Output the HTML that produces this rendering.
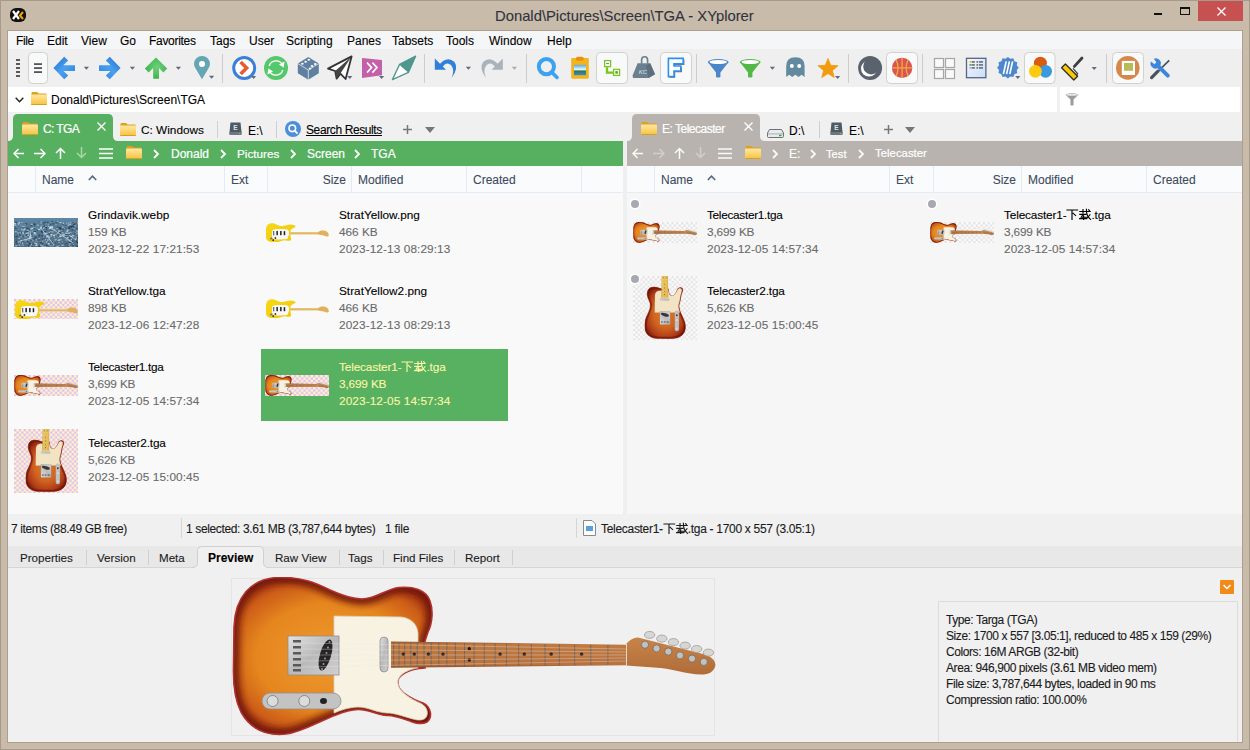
<!DOCTYPE html>
<html><head><meta charset="utf-8"><style>
*{margin:0;padding:0;box-sizing:border-box}
html,body{width:1250px;height:750px;overflow:hidden}
body{position:relative;background:#c9bba9;font-family:"Liberation Sans",sans-serif;font-size:12px;color:#000}
.a{position:absolute}
.t{position:absolute;white-space:nowrap;line-height:1;-webkit-text-stroke:0.1px currentColor}
</style></head><body>
<svg width="0" height="0" style="position:absolute"><defs><filter id="blur3" x="-20%" y="-20%" width="140%" height="140%"><feGaussianBlur stdDeviation="3"/></filter><linearGradient id="fg" x1="0" y1="0" x2="0" y2="1"><stop offset="0" stop-color="#ffe7a2"/><stop offset="1" stop-color="#f6c23e"/></linearGradient><pattern id="ckp" width="4.8" height="4.8" patternUnits="userSpaceOnUse"><rect width="4.8" height="4.8" fill="#fdf9c4"/><rect width="2.4" height="2.4" fill="#e4bdf4"/><rect x="2.4" y="2.4" width="2.4" height="2.4" fill="#e4bdf4"/></pattern><pattern id="ckg" width="4.8" height="4.8" patternUnits="userSpaceOnUse"><rect width="4.8" height="4.8" fill="#fcfcfc"/><rect width="2.4" height="2.4" fill="#e4e4e4"/><rect x="2.4" y="2.4" width="2.4" height="2.4" fill="#e4e4e4"/></pattern><radialGradient id="gburst" gradientUnits="userSpaceOnUse" cx="100" cy="80" r="125" gradientTransform="translate(100 80) scale(1 0.72) translate(-100 -80)"><stop offset="0" stop-color="#ee9a30"/><stop offset="0.6" stop-color="#e5861e"/><stop offset="0.85" stop-color="#cc5c18"/><stop offset="1" stop-color="#9a2e12"/></radialGradient><radialGradient id="gburst2" gradientUnits="userSpaceOnUse" cx="100" cy="80" r="115" gradientTransform="translate(100 80) scale(1 0.8) translate(-100 -80)"><stop offset="0" stop-color="#de7a2a"/><stop offset="0.5" stop-color="#d06420"/><stop offset="0.8" stop-color="#b23e18"/><stop offset="1" stop-color="#7a1c0c"/></radialGradient><linearGradient id="gmaple" x1="0" y1="0" x2="0" y2="1"><stop offset="0" stop-color="#f4cc58"/><stop offset="1" stop-color="#e8b440"/></linearGradient><linearGradient id="gmaple2" x1="0" y1="0" x2="0" y2="1"><stop offset="0" stop-color="#d8a038"/><stop offset="0.15" stop-color="#f2c854"/><stop offset="0.85" stop-color="#f0c450"/><stop offset="1" stop-color="#d09a34"/></linearGradient><linearGradient id="gneck" x1="0" y1="0" x2="0" y2="1"><stop offset="0" stop-color="#c88448"/><stop offset="1" stop-color="#b06c38"/></linearGradient><linearGradient id="gneck2" x1="0" y1="0" x2="0" y2="1"><stop offset="0" stop-color="#94562e"/><stop offset="0.12" stop-color="#bf7a42"/><stop offset="0.88" stop-color="#b8723e"/><stop offset="1" stop-color="#8a4c26"/></linearGradient><linearGradient id="gchrome" x1="0" y1="0" x2="1" y2="1"><stop offset="0" stop-color="#e2e2e2"/><stop offset="0.5" stop-color="#b9b9b9"/><stop offset="1" stop-color="#d0d0d0"/></linearGradient><linearGradient id="gyellow" x1="0" y1="0" x2="1" y2="1"><stop offset="0" stop-color="#f6d818"/><stop offset="1" stop-color="#f0c808"/></linearGradient><linearGradient id="ggr" x1="0" y1="0" x2="0" y2="1"><stop offset="0" stop-color="#5f88a8"/><stop offset="0.2" stop-color="#5a7e98"/><stop offset="1" stop-color="#4e6e86"/></linearGradient><symbol id="grind" viewBox="0 0 64 29"><rect width="64" height="29" fill="url(#ggr)"/><rect x="29.0" y="17.6" width="2.3" height="1.1" fill="#c9dae6" opacity="0.8"/><rect x="11.8" y="16.3" width="1.8" height="1.4" fill="#2c4458" opacity="0.8"/><rect x="28.6" y="6.7" width="1.7" height="1.5" fill="#1f3346" opacity="0.8"/><rect x="38.1" y="13.3" width="1.5" height="1.3" fill="#8fb0c6" opacity="0.8"/><rect x="39.9" y="24.6" width="0.9" height="0.6" fill="#c9dae6" opacity="0.8"/><rect x="38.4" y="23.2" width="1.3" height="1.2" fill="#c9dae6" opacity="0.8"/><rect x="33.2" y="19.6" width="1.6" height="1.3" fill="#22384c" opacity="0.8"/><rect x="41.9" y="13.6" width="1.7" height="1.5" fill="#2c4458" opacity="0.8"/><rect x="45.3" y="11.2" width="1.2" height="0.9" fill="#2c4458" opacity="0.8"/><rect x="36.0" y="5.8" width="1.0" height="0.9" fill="#2c4458" opacity="0.8"/><rect x="61.3" y="25.0" width="0.8" height="0.8" fill="#1f3346" opacity="0.8"/><rect x="30.1" y="28.5" width="1.4" height="0.7" fill="#c9dae6" opacity="0.8"/><rect x="49.8" y="10.0" width="0.9" height="0.9" fill="#a8c0d0" opacity="0.8"/><rect x="48.5" y="6.1" width="1.2" height="0.7" fill="#1f3346" opacity="0.8"/><rect x="29.8" y="15.7" width="1.9" height="0.8" fill="#c9dae6" opacity="0.8"/><rect x="63.1" y="23.0" width="1.5" height="1.0" fill="#a8c0d0" opacity="0.8"/><rect x="26.9" y="8.5" width="1.2" height="1.6" fill="#e6eef4" opacity="0.8"/><rect x="63.9" y="3.5" width="1.1" height="1.6" fill="#2c4458" opacity="0.8"/><rect x="2.7" y="6.8" width="1.5" height="0.6" fill="#456a86" opacity="0.8"/><rect x="53.1" y="13.0" width="0.9" height="0.8" fill="#c9dae6" opacity="0.8"/><rect x="1.0" y="12.6" width="1.8" height="0.7" fill="#22384c" opacity="0.8"/><rect x="53.3" y="6.5" width="1.4" height="1.2" fill="#e6eef4" opacity="0.8"/><rect x="58.1" y="24.3" width="1.2" height="0.8" fill="#c9dae6" opacity="0.8"/><rect x="44.0" y="13.1" width="1.6" height="0.7" fill="#1f3346" opacity="0.8"/><rect x="6.6" y="4.0" width="2.3" height="0.8" fill="#a8c0d0" opacity="0.8"/><rect x="16.4" y="24.4" width="1.8" height="0.9" fill="#8fb0c6" opacity="0.8"/><rect x="59.5" y="28.4" width="1.0" height="1.1" fill="#2c4458" opacity="0.8"/><rect x="17.9" y="26.9" width="1.1" height="0.6" fill="#e6eef4" opacity="0.8"/><rect x="26.3" y="9.5" width="0.9" height="0.9" fill="#8fb0c6" opacity="0.8"/><rect x="5.9" y="6.6" width="1.5" height="0.9" fill="#8fb0c6" opacity="0.8"/><rect x="37.8" y="27.0" width="1.6" height="1.0" fill="#e6eef4" opacity="0.8"/><rect x="61.6" y="3.6" width="1.8" height="1.1" fill="#e6eef4" opacity="0.8"/><rect x="20.4" y="29.0" width="0.9" height="1.1" fill="#1f3346" opacity="0.8"/><rect x="57.6" y="22.2" width="1.9" height="1.4" fill="#456a86" opacity="0.8"/><rect x="22.5" y="20.8" width="2.2" height="1.5" fill="#a8c0d0" opacity="0.8"/><rect x="60.4" y="3.8" width="1.6" height="0.6" fill="#a8c0d0" opacity="0.8"/><rect x="24.3" y="3.3" width="0.9" height="0.7" fill="#2c4458" opacity="0.8"/><rect x="63.6" y="25.9" width="2.0" height="1.0" fill="#22384c" opacity="0.8"/><rect x="28.2" y="24.8" width="0.9" height="1.4" fill="#1f3346" opacity="0.8"/><rect x="19.9" y="5.3" width="0.8" height="1.6" fill="#2c4458" opacity="0.8"/><rect x="31.8" y="19.0" width="2.3" height="0.9" fill="#1f3346" opacity="0.8"/><rect x="23.5" y="6.7" width="1.8" height="1.1" fill="#456a86" opacity="0.8"/><rect x="42.2" y="14.5" width="2.2" height="0.9" fill="#e6eef4" opacity="0.8"/><rect x="12.7" y="14.2" width="2.1" height="1.5" fill="#c9dae6" opacity="0.8"/><rect x="24.6" y="18.2" width="1.3" height="0.7" fill="#22384c" opacity="0.8"/><rect x="22.4" y="26.3" width="0.9" height="0.7" fill="#e6eef4" opacity="0.8"/><rect x="52.6" y="5.9" width="1.6" height="1.5" fill="#a8c0d0" opacity="0.8"/><rect x="24.5" y="16.5" width="1.9" height="1.3" fill="#22384c" opacity="0.8"/><rect x="20.5" y="24.5" width="1.2" height="1.2" fill="#e6eef4" opacity="0.8"/><rect x="36.5" y="11.0" width="2.1" height="0.6" fill="#8fb0c6" opacity="0.8"/><rect x="25.9" y="7.9" width="2.0" height="0.9" fill="#8fb0c6" opacity="0.8"/><rect x="51.0" y="28.6" width="1.0" height="0.7" fill="#456a86" opacity="0.8"/><rect x="61.3" y="20.8" width="1.1" height="1.1" fill="#8fb0c6" opacity="0.8"/><rect x="45.7" y="22.6" width="1.7" height="0.6" fill="#c9dae6" opacity="0.8"/><rect x="17.4" y="12.0" width="1.9" height="1.1" fill="#8fb0c6" opacity="0.8"/><rect x="25.2" y="23.6" width="2.2" height="0.7" fill="#a8c0d0" opacity="0.8"/><rect x="8.3" y="14.8" width="1.8" height="1.5" fill="#a8c0d0" opacity="0.8"/><rect x="35.2" y="20.0" width="1.6" height="1.4" fill="#456a86" opacity="0.8"/><rect x="29.7" y="19.9" width="1.1" height="1.3" fill="#2c4458" opacity="0.8"/><rect x="13.7" y="26.4" width="2.4" height="1.6" fill="#456a86" opacity="0.8"/><rect x="16.8" y="21.7" width="0.8" height="1.1" fill="#1f3346" opacity="0.8"/><rect x="28.2" y="17.3" width="2.0" height="1.1" fill="#1f3346" opacity="0.8"/><rect x="14.0" y="25.6" width="1.5" height="0.6" fill="#456a86" opacity="0.8"/><rect x="43.9" y="26.8" width="1.6" height="1.6" fill="#22384c" opacity="0.8"/><rect x="60.5" y="15.8" width="2.3" height="0.7" fill="#c9dae6" opacity="0.8"/><rect x="28.1" y="17.5" width="2.1" height="1.2" fill="#8fb0c6" opacity="0.8"/><rect x="33.5" y="24.9" width="1.7" height="0.9" fill="#a8c0d0" opacity="0.8"/><rect x="61.1" y="25.6" width="1.8" height="0.9" fill="#8fb0c6" opacity="0.8"/><rect x="62.0" y="16.6" width="1.7" height="0.8" fill="#2c4458" opacity="0.8"/><rect x="32.2" y="18.7" width="0.8" height="1.6" fill="#a8c0d0" opacity="0.8"/><rect x="34.8" y="28.7" width="1.0" height="0.7" fill="#8fb0c6" opacity="0.8"/><rect x="4.2" y="17.0" width="1.5" height="1.6" fill="#a8c0d0" opacity="0.8"/><rect x="17.2" y="15.3" width="1.0" height="1.0" fill="#22384c" opacity="0.8"/><rect x="33.6" y="5.8" width="1.5" height="0.6" fill="#e6eef4" opacity="0.8"/><rect x="8.3" y="23.3" width="0.8" height="0.8" fill="#c9dae6" opacity="0.8"/><rect x="0.8" y="10.4" width="2.0" height="0.8" fill="#22384c" opacity="0.8"/><rect x="6.7" y="22.0" width="1.0" height="1.1" fill="#e6eef4" opacity="0.8"/><rect x="45.9" y="21.2" width="2.2" height="0.6" fill="#a8c0d0" opacity="0.8"/><rect x="52.8" y="19.0" width="1.7" height="1.5" fill="#c9dae6" opacity="0.8"/><rect x="33.9" y="25.1" width="1.8" height="1.5" fill="#c9dae6" opacity="0.8"/><rect x="58.5" y="19.3" width="1.4" height="0.8" fill="#456a86" opacity="0.8"/><rect x="57.0" y="8.1" width="2.0" height="0.8" fill="#2c4458" opacity="0.8"/><rect x="8.6" y="9.2" width="2.0" height="0.9" fill="#2c4458" opacity="0.8"/><rect x="27.8" y="27.5" width="1.7" height="1.3" fill="#c9dae6" opacity="0.8"/><rect x="25.8" y="20.8" width="0.8" height="0.8" fill="#456a86" opacity="0.8"/><rect x="58.3" y="28.2" width="1.0" height="1.1" fill="#456a86" opacity="0.8"/><rect x="32.2" y="20.8" width="1.1" height="0.7" fill="#2c4458" opacity="0.8"/><rect x="1.6" y="22.8" width="1.8" height="1.5" fill="#22384c" opacity="0.8"/><rect x="9.4" y="7.8" width="1.1" height="1.4" fill="#e6eef4" opacity="0.8"/><rect x="59.3" y="5.5" width="0.9" height="1.6" fill="#22384c" opacity="0.8"/><rect x="5.0" y="5.5" width="1.4" height="1.0" fill="#456a86" opacity="0.8"/><rect x="27.5" y="18.6" width="0.8" height="1.3" fill="#c9dae6" opacity="0.8"/><rect x="11.6" y="14.8" width="2.0" height="1.0" fill="#c9dae6" opacity="0.8"/><rect x="38.7" y="5.5" width="2.1" height="0.9" fill="#2c4458" opacity="0.8"/><rect x="51.3" y="21.3" width="2.2" height="1.2" fill="#a8c0d0" opacity="0.8"/><rect x="36.5" y="8.0" width="1.7" height="0.9" fill="#e6eef4" opacity="0.8"/><rect x="17.9" y="6.0" width="2.0" height="0.8" fill="#a8c0d0" opacity="0.8"/><rect x="8.5" y="11.6" width="1.7" height="1.0" fill="#a8c0d0" opacity="0.8"/><rect x="49.0" y="13.5" width="2.0" height="0.7" fill="#456a86" opacity="0.8"/><rect x="19.3" y="5.6" width="2.2" height="1.6" fill="#1f3346" opacity="0.8"/><rect x="14.9" y="27.6" width="1.9" height="0.9" fill="#a8c0d0" opacity="0.8"/><rect x="36.5" y="16.9" width="1.4" height="1.6" fill="#c9dae6" opacity="0.8"/><rect x="44.9" y="22.8" width="2.4" height="0.6" fill="#2c4458" opacity="0.8"/><rect x="47.3" y="9.7" width="1.4" height="0.7" fill="#c9dae6" opacity="0.8"/><rect x="41.5" y="3.3" width="1.2" height="0.9" fill="#456a86" opacity="0.8"/><rect x="35.2" y="16.2" width="2.3" height="1.2" fill="#2c4458" opacity="0.8"/><rect x="40.8" y="24.0" width="0.9" height="1.2" fill="#1f3346" opacity="0.8"/><rect x="24.7" y="27.4" width="1.4" height="1.6" fill="#22384c" opacity="0.8"/><rect x="34.7" y="18.5" width="1.5" height="1.1" fill="#e6eef4" opacity="0.8"/><rect x="33.7" y="18.5" width="1.4" height="0.9" fill="#e6eef4" opacity="0.8"/><rect x="35.9" y="10.4" width="1.9" height="0.9" fill="#1f3346" opacity="0.8"/><rect x="49.4" y="18.2" width="1.8" height="1.0" fill="#a8c0d0" opacity="0.8"/><rect x="3.4" y="11.2" width="1.4" height="1.2" fill="#456a86" opacity="0.8"/><rect x="4.7" y="26.5" width="1.5" height="1.1" fill="#c9dae6" opacity="0.8"/><rect x="2.9" y="5.6" width="2.1" height="1.5" fill="#8fb0c6" opacity="0.8"/><rect x="62.6" y="24.2" width="1.8" height="0.7" fill="#a8c0d0" opacity="0.8"/><rect x="29.2" y="8.3" width="0.9" height="1.1" fill="#2c4458" opacity="0.8"/><rect x="23.3" y="6.6" width="1.5" height="1.2" fill="#a8c0d0" opacity="0.8"/><rect x="23.3" y="22.3" width="2.1" height="0.7" fill="#e6eef4" opacity="0.8"/><rect x="47.0" y="9.2" width="1.0" height="1.5" fill="#456a86" opacity="0.8"/><rect x="17.6" y="18.9" width="2.0" height="1.3" fill="#c9dae6" opacity="0.8"/><rect x="40.5" y="22.6" width="1.1" height="0.8" fill="#c9dae6" opacity="0.8"/><rect x="56.2" y="4.0" width="0.9" height="0.9" fill="#a8c0d0" opacity="0.8"/><rect x="1.7" y="4.0" width="1.2" height="0.9" fill="#2c4458" opacity="0.8"/><rect x="58.4" y="7.2" width="1.2" height="1.6" fill="#22384c" opacity="0.8"/><rect x="30.6" y="8.5" width="1.3" height="1.3" fill="#2c4458" opacity="0.8"/><rect x="51.3" y="14.6" width="2.1" height="1.4" fill="#c9dae6" opacity="0.8"/><rect x="28.4" y="22.4" width="1.4" height="0.8" fill="#8fb0c6" opacity="0.8"/><rect x="41.8" y="28.7" width="1.3" height="1.1" fill="#8fb0c6" opacity="0.8"/><rect x="27.4" y="12.6" width="1.0" height="1.5" fill="#2c4458" opacity="0.8"/><rect x="34.8" y="14.2" width="1.7" height="1.4" fill="#22384c" opacity="0.8"/><rect x="19.1" y="23.2" width="0.9" height="0.8" fill="#2c4458" opacity="0.8"/><rect x="44.5" y="15.9" width="2.0" height="0.9" fill="#8fb0c6" opacity="0.8"/><rect x="14.0" y="20.1" width="1.3" height="1.5" fill="#456a86" opacity="0.8"/><rect x="45.4" y="17.8" width="2.3" height="1.5" fill="#e6eef4" opacity="0.8"/><rect x="28.0" y="23.9" width="1.3" height="0.9" fill="#a8c0d0" opacity="0.8"/><rect x="61.9" y="22.0" width="1.6" height="0.7" fill="#456a86" opacity="0.8"/><rect x="1.5" y="20.6" width="1.7" height="1.4" fill="#456a86" opacity="0.8"/><rect x="51.0" y="17.1" width="2.1" height="1.2" fill="#8fb0c6" opacity="0.8"/><rect x="5.7" y="14.8" width="2.2" height="1.4" fill="#c9dae6" opacity="0.8"/><rect x="33.0" y="17.1" width="1.7" height="1.6" fill="#a8c0d0" opacity="0.8"/><rect x="4.1" y="17.2" width="2.1" height="0.7" fill="#2c4458" opacity="0.8"/><rect x="17.5" y="5.7" width="1.3" height="0.6" fill="#8fb0c6" opacity="0.8"/><rect x="6.2" y="24.2" width="1.5" height="1.3" fill="#22384c" opacity="0.8"/><rect x="49.0" y="16.6" width="2.0" height="1.0" fill="#456a86" opacity="0.8"/><rect x="51.7" y="11.7" width="1.0" height="1.1" fill="#2c4458" opacity="0.8"/><rect x="45.3" y="26.8" width="1.5" height="1.4" fill="#456a86" opacity="0.8"/><rect x="54.6" y="24.0" width="2.1" height="1.5" fill="#1f3346" opacity="0.8"/><rect x="33.5" y="21.5" width="2.1" height="1.0" fill="#a8c0d0" opacity="0.8"/><rect x="58.6" y="9.4" width="1.1" height="1.2" fill="#8fb0c6" opacity="0.8"/><rect x="20.5" y="13.1" width="1.6" height="0.9" fill="#1f3346" opacity="0.8"/><rect x="30.2" y="22.0" width="1.3" height="0.8" fill="#8fb0c6" opacity="0.8"/><rect x="58.4" y="22.6" width="0.8" height="1.1" fill="#1f3346" opacity="0.8"/><rect x="20.0" y="8.1" width="1.4" height="1.2" fill="#22384c" opacity="0.8"/><rect x="38.1" y="8.8" width="1.1" height="0.9" fill="#8fb0c6" opacity="0.8"/><rect x="58.3" y="27.4" width="1.8" height="1.5" fill="#22384c" opacity="0.8"/><rect x="54.6" y="15.6" width="1.4" height="1.6" fill="#2c4458" opacity="0.8"/><rect x="30.9" y="8.7" width="0.9" height="1.5" fill="#a8c0d0" opacity="0.8"/><rect x="62.5" y="23.7" width="2.0" height="1.4" fill="#1f3346" opacity="0.8"/><rect x="42.1" y="9.2" width="0.8" height="1.1" fill="#456a86" opacity="0.8"/><rect x="28.8" y="9.4" width="1.5" height="1.5" fill="#a8c0d0" opacity="0.8"/><rect x="10.0" y="11.4" width="1.2" height="1.5" fill="#8fb0c6" opacity="0.8"/><rect x="40.8" y="28.8" width="1.2" height="1.1" fill="#8fb0c6" opacity="0.8"/><rect x="36.6" y="7.6" width="1.1" height="1.5" fill="#8fb0c6" opacity="0.8"/><rect x="52.6" y="5.1" width="1.2" height="1.3" fill="#2c4458" opacity="0.8"/><rect x="56.9" y="21.0" width="0.9" height="1.3" fill="#e6eef4" opacity="0.8"/><rect x="1.2" y="7.9" width="1.1" height="1.3" fill="#22384c" opacity="0.8"/><rect x="13.3" y="17.1" width="1.6" height="0.8" fill="#e6eef4" opacity="0.8"/><rect x="20.2" y="13.5" width="1.7" height="1.6" fill="#2c4458" opacity="0.8"/><rect x="23.0" y="20.9" width="1.0" height="1.0" fill="#22384c" opacity="0.8"/><rect x="47.8" y="23.4" width="1.0" height="1.0" fill="#a8c0d0" opacity="0.8"/><rect x="45.6" y="15.4" width="1.3" height="0.7" fill="#1f3346" opacity="0.8"/><rect x="54.8" y="25.0" width="2.0" height="1.5" fill="#8fb0c6" opacity="0.8"/><rect x="18.6" y="12.8" width="1.7" height="0.9" fill="#456a86" opacity="0.8"/><rect x="48.3" y="17.4" width="0.9" height="0.8" fill="#a8c0d0" opacity="0.8"/><rect x="46.8" y="11.6" width="2.3" height="1.2" fill="#456a86" opacity="0.8"/><rect x="28.6" y="12.9" width="1.0" height="1.2" fill="#8fb0c6" opacity="0.8"/><rect x="43.4" y="21.4" width="1.1" height="1.0" fill="#22384c" opacity="0.8"/><rect x="37.9" y="5.3" width="1.2" height="0.8" fill="#2c4458" opacity="0.8"/><rect x="27.8" y="23.1" width="1.3" height="1.4" fill="#8fb0c6" opacity="0.8"/><rect x="41.4" y="22.9" width="2.1" height="1.0" fill="#456a86" opacity="0.8"/><rect x="59.0" y="19.2" width="2.0" height="1.2" fill="#456a86" opacity="0.8"/><rect x="62.8" y="23.5" width="1.9" height="1.2" fill="#1f3346" opacity="0.8"/><rect x="16.7" y="7.9" width="1.3" height="1.0" fill="#a8c0d0" opacity="0.8"/><rect x="13.1" y="11.7" width="1.3" height="0.7" fill="#8fb0c6" opacity="0.8"/><rect x="16.2" y="17.0" width="1.3" height="0.8" fill="#8fb0c6" opacity="0.8"/><rect x="36.7" y="8.2" width="2.3" height="1.6" fill="#c9dae6" opacity="0.8"/><rect x="36.3" y="3.7" width="1.9" height="1.4" fill="#8fb0c6" opacity="0.8"/><rect x="15.7" y="18.0" width="1.9" height="0.9" fill="#456a86" opacity="0.8"/><rect x="17.0" y="26.0" width="1.5" height="1.3" fill="#c9dae6" opacity="0.8"/><rect x="57.9" y="17.1" width="1.7" height="1.2" fill="#e6eef4" opacity="0.8"/><rect x="10.8" y="22.4" width="2.2" height="0.9" fill="#8fb0c6" opacity="0.8"/><rect x="7.8" y="24.4" width="1.3" height="1.5" fill="#c9dae6" opacity="0.8"/><rect x="48.5" y="12.4" width="1.1" height="1.2" fill="#2c4458" opacity="0.8"/><rect x="29.1" y="13.5" width="2.1" height="1.5" fill="#8fb0c6" opacity="0.8"/><rect x="19.7" y="20.5" width="2.0" height="1.0" fill="#1f3346" opacity="0.8"/><rect x="10.1" y="13.7" width="0.9" height="1.1" fill="#2c4458" opacity="0.8"/><rect x="36.4" y="7.5" width="1.6" height="0.9" fill="#456a86" opacity="0.8"/><rect x="3.4" y="23.4" width="2.0" height="1.4" fill="#a8c0d0" opacity="0.8"/><rect x="61.4" y="18.6" width="1.6" height="1.0" fill="#a8c0d0" opacity="0.8"/><rect x="48.1" y="15.6" width="2.4" height="1.4" fill="#a8c0d0" opacity="0.8"/><rect x="52.8" y="6.1" width="1.0" height="1.5" fill="#456a86" opacity="0.8"/><rect x="33.6" y="14.2" width="2.2" height="0.9" fill="#1f3346" opacity="0.8"/><rect x="18.9" y="19.0" width="1.5" height="1.0" fill="#456a86" opacity="0.8"/><rect x="48.1" y="10.9" width="1.7" height="0.7" fill="#2c4458" opacity="0.8"/><rect x="54.0" y="9.3" width="2.2" height="1.6" fill="#22384c" opacity="0.8"/><rect x="44.5" y="16.7" width="1.2" height="0.9" fill="#a8c0d0" opacity="0.8"/><rect x="60.2" y="25.9" width="2.4" height="1.3" fill="#456a86" opacity="0.8"/><rect x="55.5" y="14.0" width="2.1" height="0.8" fill="#a8c0d0" opacity="0.8"/><rect x="36.3" y="26.5" width="1.0" height="1.4" fill="#2c4458" opacity="0.8"/><rect x="56.5" y="18.0" width="1.5" height="0.9" fill="#e6eef4" opacity="0.8"/><rect x="1.5" y="7.5" width="1.5" height="1.1" fill="#a8c0d0" opacity="0.8"/><rect x="9.0" y="21.0" width="1.2" height="0.9" fill="#22384c" opacity="0.8"/><rect x="57.5" y="11.0" width="1.6" height="1.5" fill="#22384c" opacity="0.8"/><rect x="56.2" y="8.3" width="2.2" height="1.3" fill="#1f3346" opacity="0.8"/><rect x="12.5" y="24.8" width="1.4" height="1.1" fill="#8fb0c6" opacity="0.8"/><rect x="40.7" y="21.1" width="1.7" height="1.1" fill="#c9dae6" opacity="0.8"/><rect x="12.3" y="25.9" width="0.9" height="0.7" fill="#456a86" opacity="0.8"/><rect x="61.5" y="10.1" width="1.5" height="1.5" fill="#456a86" opacity="0.8"/><rect x="44.5" y="27.4" width="1.5" height="0.7" fill="#c9dae6" opacity="0.8"/><rect x="55.1" y="6.1" width="1.9" height="0.9" fill="#c9dae6" opacity="0.8"/><rect x="32.1" y="10.7" width="1.2" height="1.4" fill="#2c4458" opacity="0.8"/><rect x="37.8" y="9.0" width="1.3" height="1.5" fill="#c9dae6" opacity="0.8"/><rect x="17.7" y="19.6" width="0.9" height="1.6" fill="#22384c" opacity="0.8"/><rect x="58.7" y="4.9" width="2.3" height="0.6" fill="#e6eef4" opacity="0.8"/><rect x="34.4" y="14.0" width="1.7" height="0.8" fill="#c9dae6" opacity="0.8"/><rect x="15.7" y="10.3" width="1.7" height="0.8" fill="#8fb0c6" opacity="0.8"/><rect x="63.2" y="3.9" width="1.5" height="1.4" fill="#a8c0d0" opacity="0.8"/><rect x="0.2" y="26.2" width="0.9" height="0.7" fill="#456a86" opacity="0.8"/><rect x="20.5" y="15.6" width="0.9" height="0.9" fill="#8fb0c6" opacity="0.8"/><rect x="38.0" y="23.1" width="1.0" height="1.0" fill="#22384c" opacity="0.8"/><rect x="35.1" y="9.7" width="1.9" height="1.3" fill="#e6eef4" opacity="0.8"/><rect x="31.3" y="8.8" width="1.7" height="1.1" fill="#1f3346" opacity="0.8"/><rect x="13.0" y="28.2" width="0.9" height="1.0" fill="#8fb0c6" opacity="0.8"/><rect x="20.8" y="18.8" width="1.8" height="1.4" fill="#22384c" opacity="0.8"/><rect x="46.3" y="25.3" width="0.8" height="0.7" fill="#8fb0c6" opacity="0.8"/><rect x="36.4" y="17.1" width="2.1" height="0.8" fill="#8fb0c6" opacity="0.8"/><rect x="3.5" y="14.1" width="1.9" height="1.4" fill="#e6eef4" opacity="0.8"/><rect x="49.0" y="16.0" width="1.8" height="1.1" fill="#a8c0d0" opacity="0.8"/><rect x="16.3" y="7.2" width="1.9" height="1.4" fill="#22384c" opacity="0.8"/><rect x="3.9" y="13.7" width="1.4" height="0.8" fill="#1f3346" opacity="0.8"/><rect x="8.2" y="22.6" width="1.8" height="0.7" fill="#22384c" opacity="0.8"/><rect x="33.4" y="28.6" width="0.8" height="1.0" fill="#8fb0c6" opacity="0.8"/><rect x="5.9" y="17.5" width="1.6" height="1.5" fill="#1f3346" opacity="0.8"/><rect x="43.5" y="21.6" width="2.4" height="1.2" fill="#e6eef4" opacity="0.8"/><rect x="16.2" y="17.3" width="1.2" height="1.1" fill="#c9dae6" opacity="0.8"/><rect x="23.3" y="11.8" width="2.4" height="1.2" fill="#1f3346" opacity="0.8"/><rect x="10.3" y="18.2" width="2.4" height="1.3" fill="#8fb0c6" opacity="0.8"/><rect x="29.6" y="13.2" width="2.1" height="1.0" fill="#1f3346" opacity="0.8"/><rect x="13.8" y="12.0" width="1.1" height="1.1" fill="#8fb0c6" opacity="0.8"/><rect x="30.7" y="13.4" width="1.8" height="1.4" fill="#22384c" opacity="0.8"/><rect x="28.6" y="28.8" width="1.9" height="1.5" fill="#c9dae6" opacity="0.8"/><rect x="34.6" y="13.9" width="0.9" height="0.9" fill="#e6eef4" opacity="0.8"/><rect x="39.7" y="16.5" width="2.0" height="1.1" fill="#c9dae6" opacity="0.8"/><rect x="17.2" y="12.4" width="1.0" height="1.5" fill="#456a86" opacity="0.8"/><rect x="8.8" y="9.3" width="2.1" height="0.7" fill="#456a86" opacity="0.8"/><rect x="53.7" y="14.7" width="2.2" height="1.0" fill="#e6eef4" opacity="0.8"/><rect x="49.3" y="16.5" width="0.9" height="1.0" fill="#c9dae6" opacity="0.8"/><rect x="31.3" y="7.9" width="1.6" height="0.7" fill="#c9dae6" opacity="0.8"/><rect x="20.0" y="14.0" width="1.7" height="0.7" fill="#e6eef4" opacity="0.8"/><rect x="20.1" y="14.7" width="1.4" height="1.5" fill="#e6eef4" opacity="0.8"/><rect x="34.2" y="14.7" width="1.0" height="1.1" fill="#456a86" opacity="0.8"/><rect x="14.5" y="10.6" width="1.4" height="0.8" fill="#1f3346" opacity="0.8"/><rect x="54.3" y="22.4" width="1.6" height="0.6" fill="#e6eef4" opacity="0.8"/><rect x="42.3" y="4.7" width="2.2" height="1.2" fill="#456a86" opacity="0.8"/><rect x="42.7" y="27.8" width="2.2" height="0.8" fill="#e6eef4" opacity="0.8"/><rect x="5.8" y="14.1" width="1.4" height="0.7" fill="#a8c0d0" opacity="0.8"/><rect x="59.6" y="10.4" width="1.9" height="0.8" fill="#a8c0d0" opacity="0.8"/><rect x="12.9" y="23.0" width="1.4" height="1.3" fill="#2c4458" opacity="0.8"/><rect x="47.5" y="26.6" width="2.1" height="1.1" fill="#e6eef4" opacity="0.8"/><rect x="44.9" y="17.4" width="1.9" height="0.6" fill="#a8c0d0" opacity="0.8"/><rect x="7.7" y="26.7" width="2.3" height="0.9" fill="#a8c0d0" opacity="0.8"/><rect x="31.7" y="18.2" width="1.6" height="0.9" fill="#e6eef4" opacity="0.8"/><rect x="4.6" y="3.9" width="1.3" height="1.0" fill="#e6eef4" opacity="0.8"/><rect x="16.8" y="20.4" width="1.1" height="1.1" fill="#456a86" opacity="0.8"/><rect x="61.1" y="12.4" width="1.7" height="1.5" fill="#2c4458" opacity="0.8"/><rect x="40.1" y="19.1" width="1.5" height="1.0" fill="#e6eef4" opacity="0.8"/><rect x="4.4" y="15.1" width="1.5" height="1.6" fill="#a8c0d0" opacity="0.8"/><rect x="2.4" y="6.5" width="1.6" height="0.9" fill="#456a86" opacity="0.8"/><rect x="30.3" y="3.5" width="1.8" height="0.9" fill="#e6eef4" opacity="0.8"/><rect x="43.5" y="9.1" width="0.8" height="1.1" fill="#a8c0d0" opacity="0.8"/><rect x="0.2" y="17.2" width="2.2" height="1.4" fill="#2c4458" opacity="0.8"/><rect x="40.0" y="17.6" width="2.1" height="1.6" fill="#456a86" opacity="0.8"/><rect x="16.9" y="5.7" width="0.8" height="1.4" fill="#c9dae6" opacity="0.8"/><rect x="44.5" y="20.9" width="2.3" height="1.4" fill="#8fb0c6" opacity="0.8"/><rect x="21.3" y="20.9" width="2.1" height="0.9" fill="#a8c0d0" opacity="0.8"/><rect x="18.3" y="22.5" width="1.7" height="0.8" fill="#c9dae6" opacity="0.8"/><rect x="23.2" y="21.4" width="2.3" height="1.3" fill="#2c4458" opacity="0.8"/><rect x="63.3" y="24.3" width="2.2" height="0.9" fill="#22384c" opacity="0.8"/><rect x="32.8" y="20.7" width="0.9" height="1.2" fill="#a8c0d0" opacity="0.8"/><rect x="55.7" y="4.4" width="1.2" height="1.1" fill="#a8c0d0" opacity="0.8"/><rect x="16.2" y="19.5" width="1.4" height="1.3" fill="#8fb0c6" opacity="0.8"/><rect x="21.4" y="22.7" width="2.1" height="1.4" fill="#a8c0d0" opacity="0.8"/><rect x="41.0" y="6.3" width="2.0" height="0.9" fill="#8fb0c6" opacity="0.8"/><rect x="8.0" y="12.8" width="1.9" height="0.8" fill="#8fb0c6" opacity="0.8"/><rect x="62.3" y="15.3" width="1.9" height="1.4" fill="#8fb0c6" opacity="0.8"/><rect x="17.2" y="10.0" width="1.2" height="1.3" fill="#a8c0d0" opacity="0.8"/><rect x="59.7" y="28.7" width="0.9" height="1.3" fill="#2c4458" opacity="0.8"/><rect x="55.7" y="8.0" width="1.4" height="1.1" fill="#2c4458" opacity="0.8"/><rect x="25.9" y="26.5" width="2.1" height="1.5" fill="#8fb0c6" opacity="0.8"/><rect x="23.9" y="11.0" width="2.1" height="1.4" fill="#e6eef4" opacity="0.8"/><rect x="14.3" y="21.8" width="1.5" height="0.7" fill="#a8c0d0" opacity="0.8"/><rect x="43.2" y="8.6" width="1.3" height="1.5" fill="#22384c" opacity="0.8"/><rect x="11.2" y="5.8" width="2.3" height="0.9" fill="#22384c" opacity="0.8"/><rect x="27.7" y="6.9" width="2.2" height="0.9" fill="#8fb0c6" opacity="0.8"/><rect x="17.5" y="13.4" width="1.3" height="0.7" fill="#c9dae6" opacity="0.8"/><rect x="23.4" y="9.7" width="0.9" height="0.7" fill="#e6eef4" opacity="0.8"/><rect x="42.9" y="3.1" width="1.3" height="0.7" fill="#c9dae6" opacity="0.8"/><rect x="63.5" y="13.6" width="0.9" height="1.0" fill="#a8c0d0" opacity="0.8"/><rect x="35.7" y="8.6" width="1.8" height="1.4" fill="#e6eef4" opacity="0.8"/><rect x="17.7" y="27.4" width="2.2" height="1.6" fill="#22384c" opacity="0.8"/><rect x="36.6" y="27.5" width="0.9" height="1.5" fill="#8fb0c6" opacity="0.8"/><rect x="34.5" y="20.5" width="1.2" height="0.6" fill="#e6eef4" opacity="0.8"/><rect x="4.0" y="15.1" width="2.2" height="0.7" fill="#456a86" opacity="0.8"/><rect x="0.7" y="16.7" width="2.1" height="1.4" fill="#22384c" opacity="0.8"/><rect x="25.6" y="23.9" width="2.1" height="1.4" fill="#2c4458" opacity="0.8"/><rect x="59.9" y="15.5" width="2.1" height="1.0" fill="#1f3346" opacity="0.8"/><rect x="0.6" y="6.7" width="1.3" height="1.3" fill="#e6eef4" opacity="0.8"/><rect x="51.9" y="12.5" width="1.8" height="1.0" fill="#e6eef4" opacity="0.8"/><rect x="4.3" y="20.0" width="1.8" height="0.9" fill="#c9dae6" opacity="0.8"/><rect x="47.5" y="8.5" width="2.0" height="1.1" fill="#c9dae6" opacity="0.8"/><rect x="11.3" y="5.8" width="1.0" height="1.0" fill="#a8c0d0" opacity="0.8"/><rect x="1.4" y="13.4" width="0.9" height="0.7" fill="#c9dae6" opacity="0.8"/><rect x="1.3" y="7.5" width="0.9" height="1.2" fill="#456a86" opacity="0.8"/><rect x="27.5" y="28.0" width="1.2" height="1.0" fill="#8fb0c6" opacity="0.8"/><rect x="52.0" y="4.8" width="1.4" height="1.5" fill="#8fb0c6" opacity="0.8"/><rect x="49.8" y="16.7" width="0.8" height="1.3" fill="#a8c0d0" opacity="0.8"/><rect x="58.3" y="4.4" width="1.8" height="0.9" fill="#22384c" opacity="0.8"/><rect x="54.8" y="19.3" width="1.6" height="1.2" fill="#2c4458" opacity="0.8"/><rect x="7.8" y="22.2" width="2.0" height="1.0" fill="#22384c" opacity="0.8"/><rect x="26.8" y="13.0" width="1.2" height="1.2" fill="#1f3346" opacity="0.8"/><rect x="33.0" y="3.8" width="1.8" height="1.0" fill="#1f3346" opacity="0.8"/><rect x="38.1" y="27.2" width="1.0" height="1.1" fill="#e6eef4" opacity="0.8"/><rect x="47.2" y="11.1" width="2.0" height="1.6" fill="#a8c0d0" opacity="0.8"/><rect x="3.4" y="28.2" width="2.0" height="1.5" fill="#2c4458" opacity="0.8"/><rect x="15.0" y="24.8" width="1.8" height="1.5" fill="#2c4458" opacity="0.8"/><rect x="51.1" y="16.3" width="2.4" height="0.7" fill="#1f3346" opacity="0.8"/><rect x="45.5" y="9.5" width="2.1" height="1.1" fill="#1f3346" opacity="0.8"/><rect x="55.4" y="8.1" width="1.2" height="1.2" fill="#2c4458" opacity="0.8"/><rect x="6.9" y="14.5" width="2.0" height="1.5" fill="#2c4458" opacity="0.8"/><rect x="51.2" y="25.2" width="2.0" height="1.1" fill="#2c4458" opacity="0.8"/><rect x="51.0" y="6.9" width="1.4" height="0.7" fill="#1f3346" opacity="0.8"/><rect x="59.4" y="27.8" width="1.2" height="0.9" fill="#a8c0d0" opacity="0.8"/><rect x="11.6" y="13.1" width="2.2" height="1.2" fill="#22384c" opacity="0.8"/><rect x="4.6" y="28.7" width="1.1" height="1.2" fill="#c9dae6" opacity="0.8"/><rect x="35.8" y="28.9" width="1.4" height="1.4" fill="#456a86" opacity="0.8"/><rect x="54.1" y="27.6" width="1.9" height="0.8" fill="#c9dae6" opacity="0.8"/><rect x="11.6" y="6.3" width="1.9" height="1.1" fill="#8fb0c6" opacity="0.8"/><rect x="17.8" y="9.7" width="1.4" height="1.2" fill="#e6eef4" opacity="0.8"/><rect x="12.6" y="28.9" width="1.9" height="1.3" fill="#456a86" opacity="0.8"/><rect x="55.7" y="23.0" width="1.1" height="0.7" fill="#e6eef4" opacity="0.8"/><rect x="27.2" y="24.3" width="1.5" height="1.1" fill="#2c4458" opacity="0.8"/><rect x="60.3" y="12.0" width="1.9" height="0.8" fill="#2c4458" opacity="0.8"/><rect x="18.2" y="25.7" width="1.3" height="1.5" fill="#22384c" opacity="0.8"/><rect x="14.4" y="15.4" width="1.1" height="1.0" fill="#c9dae6" opacity="0.8"/><rect x="28.7" y="4.7" width="1.5" height="0.9" fill="#22384c" opacity="0.8"/><rect x="42.1" y="10.0" width="1.9" height="0.6" fill="#c9dae6" opacity="0.8"/><rect x="1.0" y="12.7" width="1.7" height="1.5" fill="#a8c0d0" opacity="0.8"/><rect x="26.9" y="11.9" width="2.1" height="1.5" fill="#2c4458" opacity="0.8"/><rect x="34.9" y="5.6" width="2.2" height="0.7" fill="#456a86" opacity="0.8"/><rect x="1.0" y="3.8" width="1.7" height="1.3" fill="#1f3346" opacity="0.8"/><rect x="42.8" y="7.0" width="0.9" height="0.8" fill="#456a86" opacity="0.8"/><rect x="30.7" y="19.9" width="0.9" height="0.8" fill="#1f3346" opacity="0.8"/><rect x="63.5" y="13.3" width="2.1" height="1.2" fill="#2c4458" opacity="0.8"/><rect x="63.8" y="4.7" width="1.5" height="1.0" fill="#c9dae6" opacity="0.8"/><rect x="33.1" y="18.2" width="1.6" height="1.4" fill="#a8c0d0" opacity="0.8"/><rect x="6.1" y="23.7" width="0.8" height="1.6" fill="#e6eef4" opacity="0.8"/><rect x="42.5" y="28.2" width="1.6" height="1.5" fill="#a8c0d0" opacity="0.8"/><rect x="30.0" y="3.4" width="2.2" height="1.5" fill="#1f3346" opacity="0.8"/><rect x="7.0" y="13.7" width="1.7" height="1.6" fill="#2c4458" opacity="0.8"/><rect x="19.3" y="16.2" width="1.0" height="1.2" fill="#8fb0c6" opacity="0.8"/><rect x="42.4" y="16.3" width="1.3" height="1.0" fill="#c9dae6" opacity="0.8"/><rect x="15.8" y="13.8" width="0.9" height="0.8" fill="#22384c" opacity="0.8"/><rect x="10.9" y="5.7" width="1.0" height="1.5" fill="#8fb0c6" opacity="0.8"/><rect x="9.2" y="17.7" width="1.1" height="1.2" fill="#2c4458" opacity="0.8"/><rect x="26.5" y="3.3" width="1.0" height="1.4" fill="#a8c0d0" opacity="0.8"/><rect x="10.0" y="16.8" width="0.8" height="0.7" fill="#e6eef4" opacity="0.8"/><rect x="58.4" y="17.1" width="2.0" height="1.4" fill="#a8c0d0" opacity="0.8"/><rect x="26.6" y="5.0" width="1.2" height="0.7" fill="#a8c0d0" opacity="0.8"/><rect x="21.0" y="15.7" width="1.8" height="1.5" fill="#8fb0c6" opacity="0.8"/><rect x="36.3" y="16.0" width="2.2" height="1.0" fill="#e6eef4" opacity="0.8"/><rect x="17.1" y="18.6" width="1.2" height="0.7" fill="#22384c" opacity="0.8"/><rect x="24.6" y="19.9" width="1.3" height="0.7" fill="#e6eef4" opacity="0.8"/><rect x="53.5" y="4.6" width="1.6" height="1.1" fill="#a8c0d0" opacity="0.8"/><rect x="52.4" y="20.6" width="1.9" height="0.6" fill="#456a86" opacity="0.8"/><rect x="31.0" y="9.0" width="2.0" height="1.1" fill="#1f3346" opacity="0.8"/><rect x="23.9" y="18.4" width="1.0" height="1.3" fill="#456a86" opacity="0.8"/><rect x="61.5" y="12.5" width="1.8" height="1.0" fill="#e6eef4" opacity="0.8"/><rect x="13.4" y="22.8" width="0.9" height="0.8" fill="#2c4458" opacity="0.8"/><rect x="33.0" y="22.6" width="0.9" height="0.7" fill="#e6eef4" opacity="0.8"/><rect x="37.7" y="24.0" width="2.3" height="1.2" fill="#456a86" opacity="0.8"/><rect x="25.7" y="10.4" width="1.9" height="0.7" fill="#c9dae6" opacity="0.8"/><rect x="53.2" y="11.5" width="1.3" height="1.4" fill="#e6eef4" opacity="0.8"/><rect x="41.1" y="4.5" width="2.0" height="0.6" fill="#2c4458" opacity="0.8"/><rect x="35.3" y="27.1" width="1.8" height="0.6" fill="#c9dae6" opacity="0.8"/><rect x="37.1" y="3.1" width="2.0" height="1.0" fill="#2c4458" opacity="0.8"/><rect x="11.0" y="5.2" width="1.9" height="0.7" fill="#22384c" opacity="0.8"/><rect x="43.3" y="23.8" width="1.5" height="1.5" fill="#2c4458" opacity="0.8"/><rect x="53.5" y="27.9" width="1.4" height="1.4" fill="#2c4458" opacity="0.8"/><rect x="45.0" y="13.3" width="1.9" height="1.3" fill="#2c4458" opacity="0.8"/><rect x="59.0" y="8.5" width="1.5" height="1.1" fill="#2c4458" opacity="0.8"/><rect x="9.9" y="10.1" width="1.5" height="1.5" fill="#a8c0d0" opacity="0.8"/><rect x="12.8" y="21.3" width="1.6" height="1.0" fill="#a8c0d0" opacity="0.8"/><rect x="32.7" y="15.5" width="1.7" height="1.5" fill="#456a86" opacity="0.8"/><rect x="12.9" y="12.0" width="1.1" height="0.9" fill="#a8c0d0" opacity="0.8"/><rect x="29.0" y="18.3" width="1.5" height="1.4" fill="#8fb0c6" opacity="0.8"/><rect x="30.8" y="28.5" width="1.3" height="1.3" fill="#c9dae6" opacity="0.8"/><rect x="40.5" y="12.1" width="1.5" height="0.6" fill="#2c4458" opacity="0.8"/><rect x="51.4" y="9.6" width="1.2" height="0.8" fill="#2c4458" opacity="0.8"/><rect x="35.8" y="28.4" width="2.3" height="1.1" fill="#22384c" opacity="0.8"/><rect x="7.5" y="7.8" width="1.8" height="1.3" fill="#8fb0c6" opacity="0.8"/><rect x="2.2" y="21.2" width="1.7" height="1.2" fill="#456a86" opacity="0.8"/><rect x="31.3" y="14.6" width="2.4" height="1.0" fill="#e6eef4" opacity="0.8"/><rect x="6.3" y="23.4" width="1.1" height="0.8" fill="#456a86" opacity="0.8"/><rect x="7.7" y="22.9" width="1.7" height="1.5" fill="#456a86" opacity="0.8"/><rect x="44.1" y="12.5" width="2.3" height="1.3" fill="#e6eef4" opacity="0.8"/><rect x="38.9" y="24.6" width="2.4" height="0.7" fill="#456a86" opacity="0.8"/><rect x="1.3" y="17.0" width="1.2" height="0.9" fill="#e6eef4" opacity="0.8"/><rect x="35.9" y="9.8" width="0.9" height="0.6" fill="#e6eef4" opacity="0.8"/><rect x="60.4" y="7.0" width="1.4" height="1.4" fill="#8fb0c6" opacity="0.8"/><rect x="39.0" y="17.1" width="2.0" height="1.1" fill="#e6eef4" opacity="0.8"/><rect x="19.6" y="14.1" width="2.0" height="1.3" fill="#c9dae6" opacity="0.8"/><rect x="30.8" y="20.8" width="1.4" height="0.8" fill="#e6eef4" opacity="0.8"/><rect x="36.2" y="12.1" width="1.2" height="1.5" fill="#2c4458" opacity="0.8"/><rect x="36.8" y="27.1" width="2.0" height="0.9" fill="#1f3346" opacity="0.8"/><rect x="6.5" y="17.7" width="1.0" height="1.6" fill="#e6eef4" opacity="0.8"/><rect x="22.6" y="6.7" width="2.3" height="1.3" fill="#8fb0c6" opacity="0.8"/><rect x="1.9" y="17.8" width="2.4" height="1.3" fill="#2c4458" opacity="0.8"/><rect x="28.0" y="20.7" width="0.9" height="1.3" fill="#22384c" opacity="0.8"/><rect x="59.2" y="25.9" width="1.0" height="0.7" fill="#c9dae6" opacity="0.8"/><rect x="5.0" y="15.7" width="1.7" height="1.6" fill="#2c4458" opacity="0.8"/><rect x="8.6" y="10.8" width="1.3" height="1.3" fill="#8fb0c6" opacity="0.8"/><rect x="62.5" y="27.7" width="2.3" height="1.5" fill="#1f3346" opacity="0.8"/><rect x="39.0" y="23.7" width="2.4" height="1.2" fill="#456a86" opacity="0.8"/><rect x="59.7" y="5.2" width="1.6" height="1.6" fill="#1f3346" opacity="0.8"/><rect x="7.0" y="10.7" width="1.3" height="1.6" fill="#a8c0d0" opacity="0.8"/><rect x="2.0" y="24.6" width="1.9" height="1.1" fill="#2c4458" opacity="0.8"/><rect x="0.0" y="4.8" width="2.1" height="1.6" fill="#c9dae6" opacity="0.8"/><rect x="26.1" y="11.7" width="1.4" height="0.6" fill="#c9dae6" opacity="0.8"/><rect x="16.8" y="18.2" width="1.6" height="0.9" fill="#456a86" opacity="0.8"/><rect x="29.1" y="9.1" width="2.2" height="0.8" fill="#8fb0c6" opacity="0.8"/><rect x="13.5" y="14.7" width="1.2" height="1.5" fill="#8fb0c6" opacity="0.8"/><rect x="15.2" y="20.0" width="1.2" height="1.1" fill="#e6eef4" opacity="0.8"/><rect x="36.7" y="3.6" width="1.3" height="0.7" fill="#456a86" opacity="0.8"/><rect x="47.3" y="8.3" width="0.9" height="0.8" fill="#2c4458" opacity="0.8"/><rect x="5.0" y="22.9" width="1.2" height="0.8" fill="#a8c0d0" opacity="0.8"/><rect x="35.7" y="6.6" width="1.9" height="0.7" fill="#2c4458" opacity="0.8"/><rect x="63.4" y="13.1" width="1.0" height="1.4" fill="#c9dae6" opacity="0.8"/><rect x="21.6" y="23.6" width="1.4" height="0.9" fill="#2c4458" opacity="0.8"/><rect x="30.5" y="24.3" width="0.8" height="1.1" fill="#a8c0d0" opacity="0.8"/><rect x="61.1" y="14.0" width="1.1" height="0.7" fill="#8fb0c6" opacity="0.8"/><rect x="56.2" y="28.0" width="2.3" height="0.9" fill="#8fb0c6" opacity="0.8"/><rect x="9.1" y="21.6" width="2.3" height="0.8" fill="#8fb0c6" opacity="0.8"/><rect x="44.9" y="9.2" width="2.2" height="1.5" fill="#22384c" opacity="0.8"/><rect x="23.5" y="21.9" width="2.3" height="0.7" fill="#2c4458" opacity="0.8"/><rect x="62.9" y="21.9" width="1.9" height="0.7" fill="#456a86" opacity="0.8"/><rect x="11.7" y="6.2" width="1.6" height="1.1" fill="#22384c" opacity="0.8"/><rect x="48.8" y="16.7" width="2.3" height="0.7" fill="#c9dae6" opacity="0.8"/><rect x="1.1" y="27.0" width="2.4" height="1.5" fill="#8fb0c6" opacity="0.8"/><rect x="10.3" y="11.6" width="1.7" height="0.9" fill="#22384c" opacity="0.8"/><rect x="22.4" y="28.9" width="1.6" height="0.6" fill="#8fb0c6" opacity="0.8"/><rect x="60.4" y="28.4" width="0.8" height="1.4" fill="#a8c0d0" opacity="0.8"/><rect x="34.8" y="10.3" width="0.9" height="1.0" fill="#c9dae6" opacity="0.8"/><rect x="61.5" y="3.6" width="1.5" height="1.6" fill="#2c4458" opacity="0.8"/><rect x="29.8" y="7.7" width="0.8" height="0.9" fill="#1f3346" opacity="0.8"/><rect x="21.5" y="25.0" width="1.7" height="1.3" fill="#e6eef4" opacity="0.8"/><rect x="39.9" y="11.2" width="1.4" height="1.5" fill="#a8c0d0" opacity="0.8"/><rect x="27.5" y="18.3" width="1.2" height="1.5" fill="#22384c" opacity="0.8"/><rect x="14.9" y="27.3" width="2.2" height="1.5" fill="#8fb0c6" opacity="0.8"/><rect x="30.0" y="17.6" width="2.3" height="1.4" fill="#456a86" opacity="0.8"/><rect x="15.0" y="18.2" width="1.1" height="1.5" fill="#e6eef4" opacity="0.8"/><rect x="40.9" y="19.5" width="0.8" height="1.1" fill="#2c4458" opacity="0.8"/><rect x="31.8" y="27.0" width="1.6" height="1.0" fill="#1f3346" opacity="0.8"/><rect x="42.4" y="13.4" width="1.6" height="1.4" fill="#22384c" opacity="0.8"/><rect x="3.6" y="11.3" width="1.8" height="0.7" fill="#8fb0c6" opacity="0.8"/><rect x="62.1" y="10.3" width="1.5" height="0.7" fill="#1f3346" opacity="0.8"/><rect x="15.0" y="24.6" width="2.1" height="0.9" fill="#2c4458" opacity="0.8"/><rect x="27.3" y="17.4" width="2.3" height="1.1" fill="#22384c" opacity="0.8"/><rect x="9.7" y="11.2" width="1.9" height="1.1" fill="#c9dae6" opacity="0.8"/><rect x="41.4" y="20.9" width="1.5" height="0.9" fill="#8fb0c6" opacity="0.8"/><rect x="43.8" y="23.7" width="1.9" height="1.4" fill="#8fb0c6" opacity="0.8"/><rect x="7.5" y="15.4" width="1.9" height="0.6" fill="#1f3346" opacity="0.8"/><rect x="61.2" y="20.1" width="1.6" height="1.2" fill="#a8c0d0" opacity="0.8"/><rect x="59.7" y="19.8" width="0.9" height="1.3" fill="#2c4458" opacity="0.8"/><rect x="16.6" y="10.5" width="1.4" height="0.9" fill="#e6eef4" opacity="0.8"/><rect x="63.0" y="19.2" width="1.0" height="1.3" fill="#1f3346" opacity="0.8"/><rect x="27.9" y="13.6" width="1.4" height="1.4" fill="#1f3346" opacity="0.8"/><rect x="36.4" y="27.5" width="1.8" height="1.1" fill="#a8c0d0" opacity="0.8"/><rect x="45.5" y="4.0" width="2.2" height="1.1" fill="#c9dae6" opacity="0.8"/><rect x="14.8" y="19.1" width="1.0" height="0.8" fill="#a8c0d0" opacity="0.8"/><rect x="20.2" y="10.1" width="1.1" height="1.2" fill="#2c4458" opacity="0.8"/><rect x="21.2" y="27.1" width="2.3" height="0.9" fill="#e6eef4" opacity="0.8"/><rect x="61.6" y="23.1" width="1.3" height="0.9" fill="#22384c" opacity="0.8"/><rect x="4.2" y="5.5" width="1.9" height="0.7" fill="#c9dae6" opacity="0.8"/><rect x="18.5" y="27.3" width="1.4" height="1.0" fill="#a8c0d0" opacity="0.8"/><rect x="4.5" y="4.4" width="1.4" height="1.1" fill="#a8c0d0" opacity="0.8"/><rect x="13.8" y="26.9" width="2.1" height="1.5" fill="#2c4458" opacity="0.8"/><rect x="7.8" y="14.3" width="1.9" height="1.4" fill="#e6eef4" opacity="0.8"/><rect x="37.5" y="13.9" width="0.8" height="0.7" fill="#8fb0c6" opacity="0.8"/><rect x="49.0" y="4.5" width="1.0" height="1.2" fill="#e6eef4" opacity="0.8"/><rect x="50.4" y="18.2" width="2.3" height="0.9" fill="#1f3346" opacity="0.8"/><rect x="45.2" y="14.9" width="1.5" height="0.7" fill="#22384c" opacity="0.8"/><rect x="12.4" y="9.6" width="2.2" height="1.2" fill="#1f3346" opacity="0.8"/><rect x="17.2" y="21.1" width="1.5" height="0.7" fill="#a8c0d0" opacity="0.8"/><rect x="31.9" y="23.4" width="1.2" height="1.4" fill="#c9dae6" opacity="0.8"/><rect x="43.6" y="19.0" width="0.9" height="1.3" fill="#8fb0c6" opacity="0.8"/><rect x="15.7" y="17.8" width="1.4" height="1.0" fill="#a8c0d0" opacity="0.8"/><rect x="46.7" y="19.1" width="1.1" height="0.8" fill="#22384c" opacity="0.8"/><rect x="63.1" y="25.7" width="2.3" height="1.2" fill="#456a86" opacity="0.8"/><rect x="19.5" y="8.7" width="2.2" height="1.1" fill="#a8c0d0" opacity="0.8"/><rect x="47.3" y="25.6" width="1.1" height="0.6" fill="#2c4458" opacity="0.8"/><rect x="45.3" y="14.7" width="1.4" height="1.0" fill="#22384c" opacity="0.8"/><rect x="27.9" y="8.5" width="0.8" height="1.5" fill="#2c4458" opacity="0.8"/><rect x="29.1" y="15.3" width="2.2" height="1.1" fill="#a8c0d0" opacity="0.8"/><rect x="43.4" y="16.1" width="2.1" height="1.5" fill="#2c4458" opacity="0.8"/><rect x="47.4" y="10.7" width="2.0" height="1.5" fill="#22384c" opacity="0.8"/><rect x="27.8" y="20.0" width="1.2" height="1.4" fill="#456a86" opacity="0.8"/><rect x="36.0" y="13.2" width="2.1" height="0.9" fill="#a8c0d0" opacity="0.8"/><rect x="16.6" y="19.0" width="1.2" height="1.0" fill="#c9dae6" opacity="0.8"/><rect x="47.8" y="14.3" width="1.6" height="0.7" fill="#c9dae6" opacity="0.8"/><path d="M26 9 L40 27 M34 8 L58 24 M16 13 L17 20 L6 23 M55 17 L62 22" stroke="#d6e2ea" stroke-width="0.9" opacity="0.8" fill="none"/></symbol>
<symbol id="tele" viewBox="0 0 485 159">
<clipPath id="tele-clip"><path d="M46 0.5 C70 -0.5 85 6 99 13 C110 18 120 22 131 22 C145 22 155 12 168 10.5 C182 9 195 13 199 24 C202 32 202 45 197 55 L194 64 L194 91 C178 92 165 98 167 107 C168 115 180 122 192 126 C200 130 202 140 196 145 C190 148 185 146 180 144.5 C170 141 163 138 156 138.5 C145 138 137 132 127 132.5 C117 133 110 136 102 139 C85 146 70 155 55 157 C35 159 20 153 10 135 C4 123 2 110 2.5 90 L3 50 C4 20 20 2 46 0.5Z"/></clipPath>
<path d="M46 0.5 C70 -0.5 85 6 99 13 C110 18 120 22 131 22 C145 22 155 12 168 10.5 C182 9 195 13 199 24 C202 32 202 45 197 55 L194 64 L194 91 C178 92 165 98 167 107 C168 115 180 122 192 126 C200 130 202 140 196 145 C190 148 185 146 180 144.5 C170 141 163 138 156 138.5 C145 138 137 132 127 132.5 C117 133 110 136 102 139 C85 146 70 155 55 157 C35 159 20 153 10 135 C4 123 2 110 2.5 90 L3 50 C4 20 20 2 46 0.5Z" fill="url(#gburst)"/>
<g clip-path="url(#tele-clip)"><path d="M46 0.5 C70 -0.5 85 6 99 13 C110 18 120 22 131 22 C145 22 155 12 168 10.5 C182 9 195 13 199 24 C202 32 202 45 197 55 L194 64 L194 91 C178 92 165 98 167 107 C168 115 180 122 192 126 C200 130 202 140 196 145 C190 148 185 146 180 144.5 C170 141 163 138 156 138.5 C145 138 137 132 127 132.5 C117 133 110 136 102 139 C85 146 70 155 55 157 C35 159 20 153 10 135 C4 123 2 110 2.5 90 L3 50 C4 20 20 2 46 0.5Z" fill="none" stroke="#6e1608" stroke-width="12" filter="url(#blur3)" opacity="0.9"/></g>
<path d="M46 0.5 C70 -0.5 85 6 99 13 C110 18 120 22 131 22 C145 22 155 12 168 10.5 C182 9 195 13 199 24 C202 32 202 45 197 55 L194 64 L194 91 C178 92 165 98 167 107 C168 115 180 122 192 126 C200 130 202 140 196 145 C190 148 185 146 180 144.5 C170 141 163 138 156 138.5 C145 138 137 132 127 132.5 C117 133 110 136 102 139 C85 146 70 155 55 157 C35 159 20 153 10 135 C4 123 2 110 2.5 90 L3 50 C4 20 20 2 46 0.5Z" fill="none" stroke="#b2302e" stroke-width="1.6"/>
<path d="M103 39 L170 40 C180 41 186 47 187 56 L187 64 L187 91 C178 92 165 98 167 107 C168 115 180 122 190 126.5 C197 130 198 138 194 141.5 C190 144 185 143 180 141.5 C170 138.5 163 136 156 136 C145 135.5 137 130 127 130 C117 130.5 110 133 103 136Z" fill="#f7f2e2" stroke="#d9d0b9" stroke-width="0.8"/>
<rect x="57" y="59" width="51" height="39" fill="url(#gchrome)" stroke="#8e8e8e" stroke-width="0.8"/>
<g fill="#5a5a5a"><rect x="62" y="63" width="8" height="2.5"/><rect x="62" y="69" width="8" height="2.5"/><rect x="62" y="75" width="8" height="2.5"/><rect x="62" y="81" width="8" height="2.5"/><rect x="62" y="87" width="8" height="2.5"/><rect x="62" y="92" width="8" height="2.5"/></g>
<ellipse cx="94.5" cy="78" rx="5.6" ry="16" transform="rotate(16 94.5 78)" fill="#262424"/><g fill="#9a9a9a"><circle cx="98.5" cy="65" r="1"/><circle cx="97" cy="70.5" r="1"/><circle cx="95.5" cy="76" r="1"/><circle cx="94" cy="81.5" r="1"/><circle cx="92.5" cy="87" r="1"/><circle cx="91" cy="92" r="1"/></g>
<rect x="149" y="60" width="8" height="35" rx="4" fill="url(#gchrome)" stroke="#909090" stroke-width="0.8"/>
<rect x="31" y="116" width="79" height="16" rx="8" fill="#c3c3c3" stroke="#8f8f8f" stroke-width="0.8"/>
<circle cx="41.6" cy="124" r="5.5" fill="#dcdcdc" stroke="#7a7a7a" stroke-width="0.8"/>
<circle cx="73.3" cy="124" r="5.5" fill="#dcdcdc" stroke="#7a7a7a" stroke-width="0.8"/>
<ellipse cx="92.5" cy="124" rx="3.5" ry="3" fill="#222"/>
<path d="M395 67 C398 64 401 61 407 60.5 L472 77 C480 79 486 84 484 90 C482 95 478 97.5 470 97.5 C455 97 445 93 430 91 L395 88.6Z" fill="url(#gneck)"/>
<path d="M395 67 V88.6" stroke="#f4f0e8" stroke-width="1.6"/>
<g fill="#d8d6d2" stroke="#9a9a9a" stroke-width="0.8">
<ellipse cx="418.6" cy="57.9" rx="5.2" ry="3.5"/><ellipse cx="430.8" cy="61.6" rx="5.2" ry="3.5"/><ellipse cx="442.4" cy="65.1" rx="5.2" ry="3.5"/><ellipse cx="454.1" cy="68.6" rx="5.2" ry="3.5"/><ellipse cx="465.7" cy="72" rx="5.2" ry="3.5"/><ellipse cx="477.4" cy="75.6" rx="5.2" ry="3.5"/>
</g>
<g fill="#c4c1bc" stroke="#6e6a66" stroke-width="0.8">
<circle cx="414" cy="67.7" r="3.6"/><circle cx="425.6" cy="71.4" r="3.6"/><circle cx="437.3" cy="74.6" r="3.6"/><circle cx="449" cy="78.4" r="3.6"/><circle cx="461" cy="81.6" r="3.6"/><circle cx="472.8" cy="84.9" r="3.6"/>
</g>
<path d="M160 64.4 L395 67.7 V88.2 L160 90.8Z" fill="url(#gneck2)"/>
<path d="M376.9 68.0 V87.8 M359.8 67.8 V88.0 M343.6 67.6 V88.2 M328.4 67.4 V88.3 M314.0 67.2 V88.5 M300.4 67.0 V88.7 M287.6 66.8 V88.8 M275.5 66.6 V88.9 M264.1 66.5 V89.1 M253.3 66.3 V89.2 M243.1 66.2 V89.3 M233.5 66.0 V89.4 M224.4 65.9 V89.5 M215.9 65.8 V89.6 M207.8 65.7 V89.7 M200.2 65.6 V89.8 M193.0 65.5 V89.8 M186.2 65.4 V89.9 M179.8 65.3 V90.0 M173.7 65.2 V90.0 M168.0 65.1 V90.1 M162.6 65.0 V90.2" stroke="#6e625a" stroke-width="0.9"/>
<g fill="#1e1a18"><circle cx="172.3" cy="77.3" r="1.7"/><circle cx="183.3" cy="77.3" r="1.7"/><circle cx="197.4" cy="77.3" r="1.7"/><circle cx="212" cy="77.3" r="1.7"/><circle cx="238.3" cy="71.8" r="1.7"/><circle cx="238.3" cy="83" r="1.7"/><circle cx="269.1" cy="77.3" r="1.7"/><circle cx="293.3" cy="77.3" r="1.7"/><circle cx="320.2" cy="77.3" r="1.7"/><circle cx="350.6" cy="77.3" r="1.7"/></g>
<g stroke="#ece9e4" stroke-width="0.5" opacity="0.7"><path d="M70 66 L395 72"/><path d="M70 72 L395 75"/><path d="M70 78 L395 78"/><path d="M70 84 L395 81"/><path d="M70 90 L395 84"/></g>
</symbol>

<symbol id="tele2" viewBox="0 0 485 159">
<clipPath id="tele2-clip"><path d="M46 0.5 C70 -0.5 85 6 99 13 C110 18 120 22 131 22 C145 22 155 12 168 10.5 C182 9 195 13 199 24 C202 32 202 45 197 55 L194 64 L194 91 C178 92 165 98 167 107 C168 115 180 122 192 126 C200 130 202 140 196 145 C190 148 185 146 180 144.5 C170 141 163 138 156 138.5 C145 138 137 132 127 132.5 C117 133 110 136 102 139 C85 146 70 155 55 157 C35 159 20 153 10 135 C4 123 2 110 2.5 90 L3 50 C4 20 20 2 46 0.5Z"/></clipPath>
<path d="M46 0.5 C70 -0.5 85 6 99 13 C110 18 120 22 131 22 C145 22 155 12 168 10.5 C182 9 195 13 199 24 C202 32 202 45 197 55 L194 64 L194 91 C178 92 165 98 167 107 C168 115 180 122 192 126 C200 130 202 140 196 145 C190 148 185 146 180 144.5 C170 141 163 138 156 138.5 C145 138 137 132 127 132.5 C117 133 110 136 102 139 C85 146 70 155 55 157 C35 159 20 153 10 135 C4 123 2 110 2.5 90 L3 50 C4 20 20 2 46 0.5Z" fill="url(#gburst2)"/>
<g clip-path="url(#tele2-clip)"><path d="M46 0.5 C70 -0.5 85 6 99 13 C110 18 120 22 131 22 C145 22 155 12 168 10.5 C182 9 195 13 199 24 C202 32 202 45 197 55 L194 64 L194 91 C178 92 165 98 167 107 C168 115 180 122 192 126 C200 130 202 140 196 145 C190 148 185 146 180 144.5 C170 141 163 138 156 138.5 C145 138 137 132 127 132.5 C117 133 110 136 102 139 C85 146 70 155 55 157 C35 159 20 153 10 135 C4 123 2 110 2.5 90 L3 50 C4 20 20 2 46 0.5Z" fill="none" stroke="#6e1608" stroke-width="12" filter="url(#blur3)" opacity="0.9"/></g>
<path d="M46 0.5 C70 -0.5 85 6 99 13 C110 18 120 22 131 22 C145 22 155 12 168 10.5 C182 9 195 13 199 24 C202 32 202 45 197 55 L194 64 L194 91 C178 92 165 98 167 107 C168 115 180 122 192 126 C200 130 202 140 196 145 C190 148 185 146 180 144.5 C170 141 163 138 156 138.5 C145 138 137 132 127 132.5 C117 133 110 136 102 139 C85 146 70 155 55 157 C35 159 20 153 10 135 C4 123 2 110 2.5 90 L3 50 C4 20 20 2 46 0.5Z" fill="none" stroke="#b2302e" stroke-width="1.6"/>
<path d="M103 39 L170 40 C180 41 186 47 187 56 L187 64 L187 91 C178 92 165 98 167 107 C168 115 180 122 190 126.5 C197 130 198 138 194 141.5 C190 144 185 143 180 141.5 C170 138.5 163 136 156 136 C145 135.5 137 130 127 130 C117 130.5 110 133 103 136Z" fill="#f2e4c2" stroke="#d9d0b9" stroke-width="0.8"/>
<rect x="57" y="59" width="51" height="39" fill="url(#gchrome)" stroke="#8e8e8e" stroke-width="0.8"/>
<g fill="#5a5a5a"><rect x="62" y="63" width="8" height="2.5"/><rect x="62" y="69" width="8" height="2.5"/><rect x="62" y="75" width="8" height="2.5"/><rect x="62" y="81" width="8" height="2.5"/><rect x="62" y="87" width="8" height="2.5"/><rect x="62" y="92" width="8" height="2.5"/></g>
<ellipse cx="94.5" cy="78" rx="5.6" ry="16" transform="rotate(16 94.5 78)" fill="#262424"/><g fill="#9a9a9a"><circle cx="98.5" cy="65" r="1"/><circle cx="97" cy="70.5" r="1"/><circle cx="95.5" cy="76" r="1"/><circle cx="94" cy="81.5" r="1"/><circle cx="92.5" cy="87" r="1"/><circle cx="91" cy="92" r="1"/></g>
<rect x="149" y="60" width="8" height="35" rx="4" fill="url(#gchrome)" stroke="#909090" stroke-width="0.8"/>
<rect x="31" y="116" width="79" height="16" rx="8" fill="#c3c3c3" stroke="#8f8f8f" stroke-width="0.8"/>
<circle cx="41.6" cy="124" r="5.5" fill="#dcdcdc" stroke="#7a7a7a" stroke-width="0.8"/>
<circle cx="73.3" cy="124" r="5.5" fill="#dcdcdc" stroke="#7a7a7a" stroke-width="0.8"/>
<ellipse cx="92.5" cy="124" rx="3.5" ry="3" fill="#222"/>
<path d="M395 67 C398 64 401 61 407 60.5 L472 77 C480 79 486 84 484 90 C482 95 478 97.5 470 97.5 C455 97 445 93 430 91 L395 88.6Z" fill="url(#gmaple)"/>
<path d="M395 67 V88.6" stroke="#f4f0e8" stroke-width="1.6"/>
<g fill="#d8d6d2" stroke="#9a9a9a" stroke-width="0.8">
<ellipse cx="418.6" cy="57.9" rx="5.2" ry="3.5"/><ellipse cx="430.8" cy="61.6" rx="5.2" ry="3.5"/><ellipse cx="442.4" cy="65.1" rx="5.2" ry="3.5"/><ellipse cx="454.1" cy="68.6" rx="5.2" ry="3.5"/><ellipse cx="465.7" cy="72" rx="5.2" ry="3.5"/><ellipse cx="477.4" cy="75.6" rx="5.2" ry="3.5"/>
</g>
<g fill="#c4c1bc" stroke="#6e6a66" stroke-width="0.8">
<circle cx="414" cy="67.7" r="3.6"/><circle cx="425.6" cy="71.4" r="3.6"/><circle cx="437.3" cy="74.6" r="3.6"/><circle cx="449" cy="78.4" r="3.6"/><circle cx="461" cy="81.6" r="3.6"/><circle cx="472.8" cy="84.9" r="3.6"/>
</g>
<path d="M160 64.4 L395 67.7 V88.2 L160 90.8Z" fill="url(#gmaple2)"/>
<path d="M376.9 68.0 V87.8 M359.8 67.8 V88.0 M343.6 67.6 V88.2 M328.4 67.4 V88.3 M314.0 67.2 V88.5 M300.4 67.0 V88.7 M287.6 66.8 V88.8 M275.5 66.6 V88.9 M264.1 66.5 V89.1 M253.3 66.3 V89.2 M243.1 66.2 V89.3 M233.5 66.0 V89.4 M224.4 65.9 V89.5 M215.9 65.8 V89.6 M207.8 65.7 V89.7 M200.2 65.6 V89.8 M193.0 65.5 V89.8 M186.2 65.4 V89.9 M179.8 65.3 V90.0 M173.7 65.2 V90.0 M168.0 65.1 V90.1 M162.6 65.0 V90.2" stroke="#8a7a60" stroke-width="0.9"/>
<g fill="#222"><circle cx="172.3" cy="77.3" r="1.7"/><circle cx="183.3" cy="77.3" r="1.7"/><circle cx="197.4" cy="77.3" r="1.7"/><circle cx="212" cy="77.3" r="1.7"/><circle cx="238.3" cy="71.8" r="1.7"/><circle cx="238.3" cy="83" r="1.7"/><circle cx="269.1" cy="77.3" r="1.7"/><circle cx="293.3" cy="77.3" r="1.7"/><circle cx="320.2" cy="77.3" r="1.7"/><circle cx="350.6" cy="77.3" r="1.7"/></g>
<g stroke="#ece9e4" stroke-width="0.5" opacity="0.7"><path d="M70 66 L395 72"/><path d="M70 72 L395 75"/><path d="M70 78 L395 78"/><path d="M70 84 L395 81"/><path d="M70 90 L395 84"/></g>
</symbol>

<symbol id="strat" viewBox="0 0 64 20">
<path d="M21 9.9 H53.2 V12.5 H21Z" fill="#e9c676"/>
<rect x="21" y="11" width="32" height="0.4" fill="#b48a44" opacity="0.6"/>
<path d="M53 10 C55 8.6 57 8 60 8.8 C62.6 9.6 64 11.5 63.8 13.4 C63.4 14.8 61.5 14.6 59.5 13.8 C57 13 55 12.8 53 12.5Z" fill="#e2b05a"/>
<path d="M1 8 C0.8 4 3 1.2 7 1.2 C11 1.2 13 4 17 4 C20 4 23 2.4 26 2.6 C28.5 2.8 31 3.6 30.6 4.8 C29 6 26 6.8 25.5 8.5 L25.5 12.7 C25 14 26.5 16.5 26 18 C25.5 19 23 18.8 21 18.4 C18 18 16 19.5 13 20 C9 20.6 4 20.2 2 18 C0.5 16.5 1.2 12 1 8Z" fill="url(#gyellow)"/>
<path d="M7.6 8 C10 6.8 16 6.8 21 7.2 C23 7.4 24 8.5 24 9.9 V12.7 C23 13.6 23.5 16 22 17 C18 17.4 12 17.6 9 17.3 C6.8 17 6.5 13 7.6 8Z" fill="#f8f8f8"/>
<rect x="8" y="9" width="1.3" height="4.4" fill="#6a7090"/>
<rect x="11.4" y="9" width="1.5" height="4.2" fill="#1e1e1e"/><rect x="15.1" y="9" width="1.5" height="4.2" fill="#1e1e1e"/><rect x="18.7" y="9.2" width="1.5" height="4" fill="#1e1e1e"/>
<circle cx="8.2" cy="18.1" r="0.95" fill="#222"/><circle cx="10.4" cy="16" r="0.9" fill="#333"/><rect x="5" y="15.8" width="2.4" height="1.5" fill="#6a7090" transform="rotate(-35 6.2 16.5)"/>
</symbol>
</defs></svg>
<div class="a" style="left:0;top:0;width:1250px;height:750px;border:1px solid #a89a8b"></div>
<svg class="a" style="left:10px;top:8px" width="17" height="14" viewBox="0 0 17 14">
<rect x="0" y="0" width="16" height="14" rx="6" fill="#111"/>
<path d="M3 3 L9 11 M9 3 L3 11" stroke="#fff" stroke-width="2.2"/>
<path d="M13 4 L10 7.5 L13 11" stroke="#f5a500" stroke-width="2" fill="none"/>
</svg>
<div class="t" style="left:495px;top:9.47px;font-size:14.8px;color:#2e3340;">Donald\Pictures\Screen\TGA - XYplorer</div>
<div class="a" style="left:1154px;top:13px;width:8px;height:2px;background:#111;"></div>
<div class="a" style="left:1180px;top:7px;width:10px;height:8px;background:transparent;border:1px solid #111;border-top-width:2px"></div>
<div class="a" style="left:1198px;top:1px;width:45px;height:20px;background:#c75050;"></div>
<svg class="a" style="left:1217px;top:7px" width="9" height="9" viewBox="0 0 9 9">
<path d="M0.5 0.5 L8.5 8.5 M8.5 0.5 L0.5 8.5" stroke="#fff" stroke-width="1.3"/></svg><div class="a" style="left:7px;top:30px;width:1236px;height:713px;background:#ad9f8e;"></div>
<div class="a" style="left:8px;top:31px;width:1234px;height:711px;background:#f0f0f0;"></div>
<div class="a" style="left:8px;top:31px;width:1234px;height:18px;background:#f5f6f7;"></div>
<div class="t" style="left:16px;top:34.84px;font-size:12px;color:#000;letter-spacing:-0.4px">File</div>
<div class="t" style="left:47px;top:34.84px;font-size:12px;color:#000;letter-spacing:0">Edit</div>
<div class="t" style="left:81px;top:34.84px;font-size:12px;color:#000;letter-spacing:0">View</div>
<div class="t" style="left:120px;top:34.84px;font-size:12px;color:#000;letter-spacing:0">Go</div>
<div class="t" style="left:149px;top:34.84px;font-size:12px;color:#000;letter-spacing:-0.3px">Favorites</div>
<div class="t" style="left:210px;top:34.84px;font-size:12px;color:#000;letter-spacing:0">Tags</div>
<div class="t" style="left:249px;top:34.84px;font-size:12px;color:#000;letter-spacing:0">User</div>
<div class="t" style="left:286px;top:34.84px;font-size:12px;color:#000;letter-spacing:0">Scripting</div>
<div class="t" style="left:347px;top:34.84px;font-size:12px;color:#000;letter-spacing:0">Panes</div>
<div class="t" style="left:392px;top:34.84px;font-size:12px;color:#000;letter-spacing:0">Tabsets</div>
<div class="t" style="left:446px;top:34.84px;font-size:12px;color:#000;letter-spacing:0">Tools</div>
<div class="t" style="left:489px;top:34.84px;font-size:12px;color:#000;letter-spacing:0">Window</div>
<div class="t" style="left:547px;top:34.84px;font-size:12px;color:#000;letter-spacing:0">Help</div>
<div class="a" style="left:8px;top:49px;width:1234px;height:38px;background:#efefef;"></div>
<svg class="a" style="left:0;top:0" width="1250" height="90" viewBox="0 0 1250 90"><defs>
<linearGradient id="gblue" x1="0" y1="0" x2="1" y2="1"><stop offset="0" stop-color="#1d6ccc"/><stop offset="0.5" stop-color="#4aa0ee"/><stop offset="1" stop-color="#2a7fdc"/></linearGradient>
<linearGradient id="gblue2" x1="1" y1="0" x2="0" y2="1"><stop offset="0" stop-color="#1d6ccc"/><stop offset="0.5" stop-color="#4aa0ee"/><stop offset="1" stop-color="#2a7fdc"/></linearGradient>
<radialGradient id="ggreen" cx="0.55" cy="0.45" r="0.6"><stop offset="0" stop-color="#70d07a"/><stop offset="1" stop-color="#38b24a"/></radialGradient>
<linearGradient id="gsky" x1="0" y1="0" x2="0" y2="1"><stop offset="0" stop-color="#5aa8e8"/><stop offset="0.45" stop-color="#e8f4fb"/><stop offset="0.6" stop-color="#2f7a4a"/><stop offset="1" stop-color="#3a8ad0"/></linearGradient>
<linearGradient id="gtable" x1="0" y1="0" x2="1" y2="1"><stop offset="0" stop-color="#f4f8fd"/><stop offset="1" stop-color="#c9dcf6"/></linearGradient>
</defs><rect x="16" y="59" width="4" height="2" fill="#5a5a5a"/><rect x="16" y="63" width="4" height="2" fill="#5a5a5a"/><rect x="16" y="67" width="4" height="2" fill="#5a5a5a"/><rect x="16" y="71" width="4" height="2" fill="#5a5a5a"/><rect x="16" y="75" width="4" height="2" fill="#5a5a5a"/><rect x="28.5" y="52.5" width="19.0" height="31.0" rx="4" fill="#f8f9fb" stroke="#d3d2c8" stroke-width="1"/><rect x="596.5" y="52.5" width="31.0" height="31.0" rx="4" fill="#f8f9fb" stroke="#d3d2c8" stroke-width="1"/><rect x="660.5" y="52.5" width="31.0" height="31.0" rx="4" fill="#f8f9fb" stroke="#d3d2c8" stroke-width="1"/><rect x="886.5" y="52.5" width="31.0" height="31.0" rx="4" fill="#f8f9fb" stroke="#d3d2c8" stroke-width="1"/><rect x="1024.5" y="52.5" width="30.5" height="31.0" rx="4" fill="#f8f9fb" stroke="#d3d2c8" stroke-width="1"/><rect x="1112.5" y="52.5" width="31.0" height="31.0" rx="4" fill="#f8f9fb" stroke="#d3d2c8" stroke-width="1"/><rect x="34" y="63.2" width="8" height="1.8" fill="#555"/><rect x="34" y="67.2" width="8" height="1.8" fill="#555"/><rect x="34" y="71.2" width="8" height="1.8" fill="#555"/><path d="M53.4 68 L64.2 56.8 L68.2 60.6 L63.4 65.2 H75 V71 H63.4 L68.2 75.6 L64.2 79.2Z" fill="url(#gblue)"/><path d="M83.8 66.8 H89.0 L86.39999999999999 69.8Z" fill="#5d6b80"/><path d="M120.6 68 L109.8 56.8 L105.8 60.6 L110.6 65.2 H99 V71 H110.6 L105.8 75.6 L109.8 79.2Z" fill="url(#gblue2)"/><path d="M129.8 66.8 H135.0 L132.4 69.8Z" fill="#5d6b80"/><path d="M156 57.4 L167.2 68.6 L163.4 72.4 L159 68 V78.8 H153.2 V68 L148.6 72.4 L144.8 68.6Z" fill="url(#ggreen)"/><path d="M175.8 66.8 H181.0 L178.4 69.8Z" fill="#5d6b80"/><path d="M202 79.2 L195.6 68.5 Q194 66 194 64 A8 8 0 0 1 210 64 Q210 66 208.4 68.5Z" fill="#64a6b4"/><circle cx="202" cy="64" r="3" fill="#fff"/><path d="M209 75.8 H214.2 L211.6 78.8Z" fill="#5d6b80"/><rect x="222" y="54" width="1" height="29" fill="#cdcdcd"/><circle cx="244.2" cy="68" r="10.5" fill="#fff" stroke="#3b80d8" stroke-width="3"/><path d="M240.6 62 L246.6 68 L240.6 74" stroke="#e95a2e" stroke-width="3.6" fill="none"/><path d="M251 76 H256.2 L253.6 79Z" fill="#5d6b80"/><circle cx="276" cy="68" r="12" fill="#55c86b"/><path d="M269.2 66 A7.2 7.2 0 0 1 282.6 65" stroke="#fff" stroke-width="1.4" fill="none"/><path d="M282.8 70 A7.2 7.2 0 0 1 269.4 71" stroke="#fff" stroke-width="1.4" fill="none"/><path d="M284.6 61.6 L283.6 67.4 L279 64.6Z" fill="#fff"/><path d="M267.4 74.4 L268.4 68.6 L273 71.4Z" fill="#fff"/><path d="M308.3 57 L318.8 63.5 V73.3 L308.3 79.8 L297.8 73.3 V63.5Z" fill="#5f80a0"/><path d="M297.8 63.5 L308.3 70 L318.8 63.5 M308.3 70 V79.8" stroke="#e6edf3" stroke-width="0.8" fill="none"/><ellipse cx="302.4" cy="63.8" rx="1.3" ry="1" fill="#fff"/><ellipse cx="305.6" cy="61.8" rx="1.3" ry="1" fill="#fff"/><ellipse cx="308.8" cy="59.8" rx="1.3" ry="1" fill="#fff"/><ellipse cx="312" cy="66" rx="1.3" ry="1" fill="#fff"/><ellipse cx="315.2" cy="64" rx="1.3" ry="1" fill="#fff"/><ellipse cx="310" cy="68.4" rx="1.3" ry="1" fill="#fff"/><path d="M351.6 56.4 L328 68.6 L335.2 71 L336.6 78.6 L340.4 73.6 L345.6 79 Z" fill="#fff" stroke="#333" stroke-width="1.8" stroke-linejoin="round"/><path d="M351.6 56.4 L335.2 71 L336.6 78.6 L340.4 73.6Z" fill="#444"/><path d="M347.2 76 H352.4 L349.8 79Z" fill="#5d6b80"/><path d="M362 58 L382 60 V75.2 L362 78Z" fill="#c45fa9"/><path d="M367 62.6 L371.6 67.6 L367 72.6 M372.4 62.6 L377 67.6 L372.4 72.6" stroke="#fff" stroke-width="1.6" fill="none"/><path d="M379 76 H384.2 L381.6 79Z" fill="#5d6b80"/><path d="M415.6 56.2 L399.6 64.4 L392.4 79.6 L408.4 72.4Z" fill="#fff" stroke="#4f968e" stroke-width="1.3" stroke-linejoin="round"/><path d="M415.6 56.2 L399.6 64.4 L401.2 66.6 L408.4 72.4Z" fill="#4f968e"/><path d="M415.6 56.2 L400 64.6 L408.4 72.4Z" fill="#4f968e"/><rect x="424" y="54" width="1" height="29" fill="#cdcdcd"/><path d="M434.8 58.4 V69.8 H446 Z" fill="#2f80d9"/><path d="M438.5 65.5 Q447 55 454.5 62 Q459 68 451.6 78 Q455 70 451 65 Q446 60.5 441.5 68.5Z" fill="#2f80d9"/><path d="M465.8 66.8 H471.0 L468.40000000000003 69.8Z" fill="#5d6b80"/><path d="M502.8 58.4 V69.8 H491.6 Z" fill="#a9b3bc"/><path d="M499.1 65.5 Q490.6 55 483.1 62 Q478.6 68 486 78 Q482.6 70 486.6 65 Q491.6 60.5 496.1 68.5Z" fill="#a9b3bc"/><path d="M511.8 66.8 H517.0 L514.4 69.8Z" fill="#a3abb4"/><rect x="526" y="54" width="1" height="29" fill="#cdcdcd"/><circle cx="546.4" cy="66.6" r="7.6" fill="none" stroke="#3ba2f2" stroke-width="4"/><path d="M552 72.4 L557 77.4" stroke="#3ba2f2" stroke-width="3.6" stroke-linecap="round"/><rect x="571.2" y="58" width="17.6" height="20.8" rx="1.2" fill="#f2b41c"/><rect x="576" y="56.8" width="7.6" height="4" rx="1.5" fill="#ee8c12"/><rect x="574" y="64.8" width="12" height="10.4" fill="url(#gsky)"/><rect x="604.6" y="60.6" width="6" height="6" fill="#fff" stroke="#7cc41e" stroke-width="1.3"/><rect x="606" y="63.2" width="3" height="0.9" fill="#5d6b80"/><path d="M607 67.2 V72.6 H613" stroke="#7cc41e" stroke-width="2.4" fill="none"/><rect x="613.6" y="69.4" width="6" height="6" fill="#fff" stroke="#7cc41e" stroke-width="1.3"/><rect x="615.3" y="71.1" width="2.6" height="2.6" fill="#5da81c"/><path d="M641.6 63.6 V60 Q641.6 56.8 644.6 56.8 Q647.6 56.8 647.6 60 V63.6" stroke="#6a7e8e" stroke-width="1.6" fill="none"/><path d="M637.6 63.2 H650.2 L655 74.2 L648.6 78 H633 L632.6 75.5Z" fill="#6b7f8f"/><path d="M650.2 63.2 L655 74.2 L648.6 78 L646 66Z" fill="#5c6f7e"/><text x="643" y="73.6" font-size="6" font-family="Liberation Sans" font-style="italic" fill="#dde4ea" text-anchor="middle">KC</text><path d="M669.6 59.6 H684.4 V65 H675.2 V67.2 H682 V72.2 H675.2 V77.8 H669.6Z" fill="#6a4a30" opacity="0.8"/><path d="M668.4 58.4 H683.2 V63.8 H674 V66 H680.8 V71 H674 V76.6 H668.4Z" fill="#fff" stroke="#2b90f2" stroke-width="1.6"/><rect x="696" y="54" width="1" height="29" fill="#cdcdcd"/><path d="M707.8000000000001 62 L716.0 72.4 V77 Q718.2 78 720.4000000000001 77 V72.4 L728.6 62Z" fill="#4a86c8"/><ellipse cx="718.2" cy="62" rx="10.4" ry="3" fill="#4a86c8"/><ellipse cx="718.2" cy="62" rx="8.8" ry="2" fill="#fff"/><path d="M739.8000000000001 62 L748.0 72.4 V77 Q750.2 78 752.4000000000001 77 V72.4 L760.6 62Z" fill="#52b848"/><ellipse cx="750.2" cy="62" rx="10.4" ry="3" fill="#52b848"/><ellipse cx="750.2" cy="62" rx="8.8" ry="2" fill="#fff"/><path d="M769.8 66.8 H775.0 L772.4 69.8Z" fill="#5d6b80"/><path d="M786.2 77 V66 Q786.2 57.3 795.4 57.3 Q804.6 57.3 804.6 66 V77 L801.6 74.8 L798.6 77 L795.4 74.8 L792.2 77 L789.2 74.8Z" fill="#6289a0"/><circle cx="791.8" cy="66" r="2" fill="#fff"/><circle cx="799.2" cy="66" r="2" fill="#fff"/><path d="M828.00 58.40 L830.70 65.28 L838.08 65.72 L832.37 70.42 L834.23 77.58 L828.00 73.60 L821.77 77.58 L823.63 70.42 L817.92 65.72 L825.30 65.28Z" fill="#f29a10" stroke="#f29a10" stroke-width="0.8" stroke-linejoin="round"/><path d="M835 76 H840.2 L837.6 79Z" fill="#5d6b80"/><rect x="848" y="54" width="1" height="29" fill="#cdcdcd"/><circle cx="870.1" cy="67.9" r="12" fill="#59626d"/><circle cx="869" cy="68.6" r="8" fill="#fff"/><circle cx="871.2" cy="66.4" r="8" fill="#59626d"/><circle cx="902.1" cy="67.9" r="10.2" fill="#d85555"/><path d="M892 67.9 H912.2 M902.1 57.8 V78 M896 59.5 Q900 67.9 896 76.3 M908.2 59.5 Q904.2 67.9 908.2 76.3" stroke="#f5a83a" stroke-width="1.3" fill="none"/><rect x="922" y="54" width="1" height="29" fill="#cdcdcd"/><rect x="934.5" y="58.5" width="9" height="9" fill="#f9f9f9" stroke="#a6a6a6" stroke-width="1.2"/><rect x="945.5" y="58.5" width="9" height="9" fill="#f9f9f9" stroke="#a6a6a6" stroke-width="1.2"/><rect x="934.5" y="69.5" width="9" height="9" fill="#f9f9f9" stroke="#a6a6a6" stroke-width="1.2"/><rect x="945.5" y="69.5" width="9" height="9" fill="#f9f9f9" stroke="#a6a6a6" stroke-width="1.2"/><rect x="966.5" y="58.3" width="19.4" height="19.4" fill="url(#gtable)" stroke="#56648a" stroke-width="1.3"/><rect x="969.4" y="61" width="2.2" height="1.8" fill="#f2c200"/><rect x="971.8" y="61" width="3" height="1.8" fill="#777b86"/><rect x="976.4" y="61" width="1.8" height="1.8" fill="#777b86"/><rect x="979" y="61" width="4" height="1.8" fill="#777b86"/><rect x="969.4" y="64" width="2.2" height="1.8" fill="#49b84a"/><rect x="971.8" y="64" width="3" height="1.8" fill="#777b86"/><rect x="976.4" y="64" width="1.8" height="1.8" fill="#777b86"/><rect x="979" y="64" width="4" height="1.8" fill="#777b86"/><rect x="969.4" y="67" width="2.2" height="1.8" fill="#ef8fd0"/><rect x="971.8" y="67" width="3" height="1.8" fill="#777b86"/><rect x="976.4" y="67" width="1.8" height="1.8" fill="#777b86"/><rect x="979" y="67" width="4" height="1.8" fill="#777b86"/><path d="M1018.70 67.70 L1016.79 70.08 L1017.25 73.10 L1014.41 74.21 L1013.30 77.05 L1010.28 76.59 L1007.90 78.50 L1005.52 76.59 L1002.50 77.05 L1001.39 74.21 L998.55 73.10 L999.01 70.08 L997.10 67.70 L999.01 65.32 L998.55 62.30 L1001.39 61.19 L1002.50 58.35 L1005.52 58.81 L1007.90 56.90 L1010.28 58.81 L1013.30 58.35 L1014.41 61.19 L1017.25 62.30 L1016.79 65.32Z" fill="#4d88cd"/><path d="M1003.4 74 L1006.2 61.4 M1006.6 74 L1009.4 61.4 M1009.8 74 L1012.6 61.4" stroke="#fff" stroke-width="1.6"/><path d="M1015.2 76 H1020.4000000000001 L1017.8000000000001 79Z" fill="#5d6b80"/><circle cx="1040.4" cy="63.2" r="6.5" fill="#d95b10"/><circle cx="1045.6" cy="71.3" r="6.4" fill="#3a9ae0"/><circle cx="1035.4" cy="71.3" r="6.4" fill="#fccb10"/><path d="M1074.4 66.4 L1082 58" stroke="#3a3f3f" stroke-width="2.8" stroke-linecap="round"/><path d="M1073 68.4 L1077.6 73.6 L1076 76.4" stroke="#3a3f3f" stroke-width="1.2" fill="none"/><path d="M1061.6 67.8 L1065.4 64 L1077.6 76.2 L1073.8 80Z" fill="#fbc900" stroke="#2e2e2e" stroke-width="1.3" stroke-linejoin="round"/><path d="M1091.6 67 H1096.8 L1094.1999999999998 70Z" fill="#5d6b80"/><rect x="1106" y="54" width="1" height="29" fill="#cdcdcd"/><circle cx="1127.8" cy="67.9" r="11.8" fill="#d4884c"/><rect x="1121.8" y="60.9" width="13.2" height="14.1" fill="#fff"/><rect x="1124" y="63" width="9" height="7.8" fill="#b8bc58"/><path d="M1152 77.2 L1169.2 60.4" stroke="#444c55" stroke-width="1.6"/><path d="M1151.6 77.6 L1158 71.2" stroke="#4a525c" stroke-width="3.2" stroke-linecap="round"/><path d="M1151 61.5 A5 5 0 0 0 1157.5 68.2 L1166.4 77 A1.8 1.8 0 0 0 1169.2 74.2 L1160.4 65.4 A5 5 0 0 0 1153.8 58.8 L1156.4 62.2 L1154.4 64.2Z" fill="#3d86de"/></svg>
<div class="a" style="left:8px;top:87px;width:1049px;height:25px;background:#fff;"></div>
<div class="a" style="left:1060px;top:87px;width:180px;height:25px;background:#fff;"></div>
<svg class="a" style="left:15px;top:97px" width="9" height="6" viewBox="0 0 9 6"><path d="M0.7 0.7 L4.5 4.7 L8.3 0.7" stroke="#222" stroke-width="1.4" fill="none"/></svg>
<svg class="a" style="left:31px;top:92px" width="16" height="13" viewBox="0 0 16 13">
<path d="M0.5 1.2 Q0.5 0 1.7 0 H5.6 Q6.3 0 6.8 0.6 L7.6 1.5 H14.8 Q15.6 1.5 15.6 2.3 V4 H0.5Z" fill="#dca21c"/>
<rect x="0" y="2.6" width="16" height="10.4" rx="1" fill="url(#fg)"/>
<rect x="0.3" y="12" width="15.4" height="1" fill="#d8a020"/>
</svg><div class="t" style="left:51px;top:93.84px;font-size:12px;color:#000;">Donald\Pictures\Screen\TGA</div>
<svg class="a" style="left:1065px;top:93px" width="14" height="13" viewBox="0 0 14 13"><path d="M0.5 1.5 Q7 -1 13.5 1.5 L8.5 6.5 V12 Q7 13 5.5 12 V6.5Z" fill="#9a9a9a"/><ellipse cx="7" cy="1.8" rx="5.5" ry="1" fill="#e8e8e8"/></svg>
<div class="a" style="left:8px;top:112px;width:1234px;height:29px;background:#f0f0f0;"></div>
<svg class="a" style="left:8px;top:112px" width="115" height="30" viewBox="0 0 115 30"><path d="M0 29 Q5 29 5 24 V7 Q5 2 10 2 H100 Q105 2 105 7 V24 Q105 29 110 29 L115 29 V30 H0Z" fill="#56b060"/></svg>
<svg class="a" style="left:22px;top:122px" width="16" height="13" viewBox="0 0 16 13">
<path d="M0.5 1.2 Q0.5 0 1.7 0 H5.6 Q6.3 0 6.8 0.6 L7.6 1.5 H14.8 Q15.6 1.5 15.6 2.3 V4 H0.5Z" fill="#dca21c"/>
<rect x="0" y="2.6" width="16" height="10.4" rx="1" fill="url(#fg)"/>
<rect x="0.3" y="12" width="15.4" height="1" fill="#d8a020"/>
</svg><div class="t" style="left:43px;top:122.84px;font-size:12px;color:#ffffff;letter-spacing:-0.6px;-webkit-text-stroke:0.2px #fff">C: TGA</div>
<svg class="a" style="left:97px;top:122px" width="9" height="9" viewBox="0 0 9 9">
<path d="M0.5 0.5 L8.5 8.5 M8.5 0.5 L0.5 8.5" stroke="#ffffff" stroke-width="1.3"/></svg><svg class="a" style="left:120px;top:123px" width="16" height="13" viewBox="0 0 16 13">
<path d="M0.5 1.2 Q0.5 0 1.7 0 H5.6 Q6.3 0 6.8 0.6 L7.6 1.5 H14.8 Q15.6 1.5 15.6 2.3 V4 H0.5Z" fill="#dca21c"/>
<rect x="0" y="2.6" width="16" height="10.4" rx="1" fill="url(#fg)"/>
<rect x="0.3" y="12" width="15.4" height="1" fill="#d8a020"/>
</svg><div class="t" style="left:141px;top:125.01px;font-size:11.8px;color:#000;">C: Windows</div>
<div class="a" style="left:217px;top:121px;width:1px;height:17px;background:#cfcfcf;"></div>
<svg class="a" style="left:229px;top:122px" width="13" height="13" viewBox="0 0 13 13">
<path d="M1.5 0.5 H11.5 L12.5 10 V12 Q12.5 12.8 11.7 12.8 H1.3 Q0.5 12.8 0.5 12 V10Z" fill="#4f5a63"/>
<rect x="0.5" y="10" width="12" height="2.8" rx="0.6" fill="#6d7780"/>
<text x="6.5" y="8" font-size="6.5" font-family="Liberation Sans" font-weight="bold" fill="#dfe4e8" text-anchor="middle">E</text>
<rect x="10" y="11" width="1.4" height="1" fill="#5fd35a"/>
</svg><div class="t" style="left:248px;top:124.84px;font-size:12px;color:#000;">E:\</div>
<div class="a" style="left:276px;top:121px;width:1px;height:17px;background:#cfcfcf;"></div>
<svg class="a" style="left:285px;top:121px" width="16" height="16" viewBox="0 0 16 16">
<circle cx="8" cy="8" r="8" fill="#4a8fd8"/>
<circle cx="7.3" cy="7.3" r="3.3" fill="none" stroke="#fff" stroke-width="1.6"/>
<path d="M9.6 9.6 L12 12" stroke="#fff" stroke-width="1.8" stroke-linecap="round"/>
</svg><div class="t" style="left:306px;top:123.84px;font-size:12px;color:#000;text-decoration:underline;letter-spacing:-0.39px">Search Results</div>
<svg class="a" style="left:403px;top:125px" width="9" height="9" viewBox="0 0 9 9"><path d="M4.5 0 V9 M0 4.5 H9" stroke="#777" stroke-width="1.5"/></svg>
<svg class="a" style="left:425px;top:127px" width="10" height="6" viewBox="0 0 10 6"><path d="M0 0 H10 L5 6Z" fill="#777"/></svg>
<div class="a" style="left:8px;top:141px;width:615px;height:25px;background:#56b060;"></div>
<svg class="a" style="left:13px;top:148px" width="12" height="11" viewBox="0 0 12 11"><path d="M1 5.5 H11 M5.5 1 L1 5.5 L5.5 10" stroke="#ffffff" stroke-width="1.5" fill="none"/></svg><svg class="a" style="left:34px;top:148px" width="12" height="11" viewBox="0 0 12 11"><path d="M0 5.5 H10 M6.5 1 L11 5.5 L6.5 10" stroke="#ffffff" stroke-width="1.5" fill="none"/></svg><svg class="a" style="left:55px;top:147px" width="11" height="12" viewBox="0 0 11 12"><path d="M5.5 12 V1.5 M1 6 L5.5 1.5 L10 6" stroke="#ffffff" stroke-width="1.5" fill="none"/></svg><svg class="a" style="left:76px;top:147px" width="11" height="12" viewBox="0 0 11 12"><path d="M5.5 0 V10.5 M1 6 L5.5 10.5 L10 6" stroke="#a8d8a8" stroke-width="1.5" fill="none"/></svg><svg class="a" style="left:99px;top:148px" width="14" height="11" viewBox="0 0 14 11"><path d="M0 1 H14 M0 5.5 H14 M0 10 H14" stroke="#ffffff" stroke-width="1.6" fill="none"/></svg><svg class="a" style="left:153px;top:149px" width="7" height="10" viewBox="0 0 7 10"><path d="M1 1 L5 5 L1 9" stroke="#ffffff" stroke-width="1.8" fill="none"/></svg><svg class="a" style="left:126px;top:146px" width="16" height="13" viewBox="0 0 16 13">
<path d="M0.5 1.2 Q0.5 0 1.7 0 H5.6 Q6.3 0 6.8 0.6 L7.6 1.5 H14.8 Q15.6 1.5 15.6 2.3 V4 H0.5Z" fill="#dca21c"/>
<rect x="0" y="2.6" width="16" height="10.4" rx="1" fill="url(#fg)"/>
<rect x="0.3" y="12" width="15.4" height="1" fill="#d8a020"/>
</svg><div class="t" style="left:171px;top:147.84px;font-size:12px;color:#ffffff;-webkit-text-stroke:0.2px #fff">Donald</div>
<div class="t" style="left:237px;top:148.10px;font-size:11.7px;color:#ffffff;-webkit-text-stroke:0.2px #fff">Pictures</div>
<div class="t" style="left:307px;top:147.84px;font-size:12px;color:#ffffff;-webkit-text-stroke:0.2px #fff">Screen</div>
<div class="t" style="left:371px;top:147.84px;font-size:12px;color:#ffffff;-webkit-text-stroke:0.2px #fff">TGA</div>
<svg class="a" style="left:220px;top:149px" width="7" height="10" viewBox="0 0 7 10"><path d="M1 1 L5 5 L1 9" stroke="#ffffff" stroke-width="1.8" fill="none"/></svg><svg class="a" style="left:290px;top:149px" width="7" height="10" viewBox="0 0 7 10"><path d="M1 1 L5 5 L1 9" stroke="#ffffff" stroke-width="1.8" fill="none"/></svg><svg class="a" style="left:354px;top:149px" width="7" height="10" viewBox="0 0 7 10"><path d="M1 1 L5 5 L1 9" stroke="#ffffff" stroke-width="1.8" fill="none"/></svg><div class="a" style="left:8px;top:166px;width:615px;height:26px;background:#fafbfd;"></div>
<div class="a" style="left:8px;top:192px;width:615px;height:1px;background:#e3ebf5;"></div>
<div class="a" style="left:35px;top:166px;width:1px;height:26px;background:#e3ebf5;"></div>
<div class="a" style="left:224px;top:166px;width:1px;height:26px;background:#e3ebf5;"></div>
<div class="a" style="left:267px;top:166px;width:1px;height:26px;background:#e3ebf5;"></div>
<div class="a" style="left:351px;top:166px;width:1px;height:26px;background:#e3ebf5;"></div>
<div class="a" style="left:466px;top:166px;width:1px;height:26px;background:#e3ebf5;"></div>
<div class="a" style="left:581px;top:166px;width:1px;height:26px;background:#e3ebf5;"></div>
<div class="t" style="left:42px;top:173.84px;font-size:12px;color:#3d4b5e;">Name</div>
<svg class="a" style="left:88px;top:175px" width="9" height="6" viewBox="0 0 9 6"><path d="M0.8 5 L4.5 1.2 L8.2 5" stroke="#58687c" stroke-width="1.6" fill="none"/></svg>
<div class="t" style="left:231px;top:173.84px;font-size:12px;color:#3d4b5e;">Ext</div>
<div class="t" style="left:346px;top:173.84px;font-size:12px;color:#3d4b5e;transform:translateX(-100%)">Size</div>
<div class="t" style="left:358px;top:173.84px;font-size:12px;color:#3d4b5e;">Modified</div>
<div class="t" style="left:473px;top:173.84px;font-size:12px;color:#3d4b5e;">Created</div>
<div class="a" style="left:8px;top:193px;width:615px;height:321px;background:#f9f9f9;"></div>
<div class="a" style="left:623px;top:141px;width:4px;height:373px;background:#efefef;"></div>
<div class="a" style="left:261px;top:349px;width:247px;height:72px;background:#57b161;"></div>
<svg class="a" style="left:14px;top:218px" width="64" height="29" viewBox="0 0 64 29"><use href="#grind"/></svg>
<div class="t" style="left:88px;top:210.01px;font-size:11.8px;color:#000;letter-spacing:0px"><span>Grindavik.webp</span></div>
<div class="t" style="left:88px;top:227.01px;font-size:11.8px;color:#6a6a6a;">159 KB</div>
<div class="t" style="left:88px;top:244.01px;font-size:11.8px;color:#6a6a6a;letter-spacing:0.1px">2023-12-22 17:21:53</div>
<svg class="a" style="left:265px;top:222px" width="64" height="20" viewBox="0 0 64 20"><use href="#strat"/></svg>
<div class="t" style="left:339px;top:210.01px;font-size:11.8px;color:#000;letter-spacing:0px"><span>StratYellow.png</span></div>
<div class="t" style="left:339px;top:227.01px;font-size:11.8px;color:#6a6a6a;">466 KB</div>
<div class="t" style="left:339px;top:244.01px;font-size:11.8px;color:#6a6a6a;letter-spacing:0.1px">2023-12-13 08:29:13</div>
<svg class="a" style="left:14px;top:299px" width="64" height="20" viewBox="0 0 64 20"><rect width="64" height="20" fill="url(#ckp)"/><use href="#strat"/></svg>
<div class="t" style="left:88px;top:286.01px;font-size:11.8px;color:#000;letter-spacing:0px"><span>StratYellow.tga</span></div>
<div class="t" style="left:88px;top:303.01px;font-size:11.8px;color:#6a6a6a;">898 KB</div>
<div class="t" style="left:88px;top:320.01px;font-size:11.8px;color:#6a6a6a;letter-spacing:0.1px">2023-12-06 12:47:28</div>
<svg class="a" style="left:265px;top:298px" width="64" height="20" viewBox="0 0 64 20"><use href="#strat"/></svg>
<div class="t" style="left:339px;top:286.01px;font-size:11.8px;color:#000;letter-spacing:0px"><span>StratYellow2.png</span></div>
<div class="t" style="left:339px;top:303.01px;font-size:11.8px;color:#6a6a6a;">466 KB</div>
<div class="t" style="left:339px;top:320.01px;font-size:11.8px;color:#6a6a6a;letter-spacing:0.1px">2023-12-13 08:29:13</div>
<svg class="a" style="left:14px;top:375px" width="64" height="21" viewBox="0 0 64 21"><rect width="64" height="21" fill="url(#ckp)"/><svg x="0" y="0" width="64" height="21" viewBox="0 0 485 159" preserveAspectRatio="none"><use href="#tele"/></svg></svg>
<div class="t" style="left:88px;top:362.01px;font-size:11.8px;color:#000;letter-spacing:-0.3px"><span>Telecaster1.tga</span></div>
<div class="t" style="left:88px;top:379.01px;font-size:11.8px;color:#6a6a6a;letter-spacing:-0.15px">3,699 KB</div>
<div class="t" style="left:88px;top:396.01px;font-size:11.8px;color:#6a6a6a;letter-spacing:0.1px">2023-12-05 14:57:34</div>
<svg class="a" style="left:265px;top:375px" width="64" height="21" viewBox="0 0 64 21"><rect width="64" height="21" fill="url(#ckp)"/><svg x="0" y="0" width="64" height="21" viewBox="0 0 485 159" preserveAspectRatio="none"><use href="#tele"/></svg></svg>
<div class="t" style="left:339px;top:362.01px;font-size:11.8px;color:#fff6a8;letter-spacing:-0.15px"><span>Telecaster1-</span><svg style="display:inline-block;vertical-align:baseline;overflow:visible" width="25" height="9" viewBox="0 0 25 9"><g transform="translate(0 -1.2) scale(1 0.93)" stroke="#fff6a8" stroke-width="1.15" fill="none" stroke-linecap="square"><path d="M1 1.2 H11.6 M6 1.2 V11.6 M7.2 4.8 L9.6 7.2"/><g transform="translate(13 0)"><path d="M0.8 3 H11.2 M4 0.8 V4.6 M0.8 6 H7.2 M4 6 L2.2 9 H7.4 M4.6 7.6 V11.6 M0.6 10.6 H7.6 M11 6.4 L7.8 10.4 M9.6 1 L10.4 1.8"/><path d="M7.4 0.6 Q7.4 8.6 11.6 11.4"/></g></g></svg><span>.tga</span></div>
<div class="t" style="left:339px;top:379.01px;font-size:11.8px;color:#fff6a8;letter-spacing:-0.15px">3,699 KB</div>
<div class="t" style="left:339px;top:396.01px;font-size:11.8px;color:#fff6a8;letter-spacing:0.1px">2023-12-05 14:57:34</div>
<svg class="a" style="left:14px;top:429px" width="64" height="64" viewBox="0 0 64 64"><rect width="64" height="64" fill="url(#ckp)"/><g transform="matrix(0,-0.26,0.26,0,11.6,63.3)"><svg width="485" height="159" viewBox="0 0 485 159"><use href="#tele2"/></svg></g></svg>
<div class="t" style="left:88px;top:438.01px;font-size:11.8px;color:#000;letter-spacing:-0.15px"><span>Telecaster2.tga</span></div>
<div class="t" style="left:88px;top:455.01px;font-size:11.8px;color:#6a6a6a;letter-spacing:-0.15px">5,626 KB</div>
<div class="t" style="left:88px;top:472.01px;font-size:11.8px;color:#6a6a6a;letter-spacing:0.1px">2023-12-05 15:00:45</div>
<svg class="a" style="left:627px;top:112px" width="139" height="30" viewBox="0 0 139 30"><path d="M0 29 Q5 29 5 24 V7 Q5 2 10 2 H128 Q133 2 133 7 V24 Q133 29 138 29 L139 29 V30 H0Z" fill="#b8b3af"/></svg>
<svg class="a" style="left:641px;top:122px" width="16" height="13" viewBox="0 0 16 13">
<path d="M0.5 1.2 Q0.5 0 1.7 0 H5.6 Q6.3 0 6.8 0.6 L7.6 1.5 H14.8 Q15.6 1.5 15.6 2.3 V4 H0.5Z" fill="#dca21c"/>
<rect x="0" y="2.6" width="16" height="10.4" rx="1" fill="url(#fg)"/>
<rect x="0.3" y="12" width="15.4" height="1" fill="#d8a020"/>
</svg><div class="t" style="left:662px;top:122.84px;font-size:12px;color:#ffffff;letter-spacing:-0.5px;-webkit-text-stroke:0.2px #fff">E: Telecaster</div>
<svg class="a" style="left:744px;top:122px" width="9" height="9" viewBox="0 0 9 9">
<path d="M0.5 0.5 L8.5 8.5 M8.5 0.5 L0.5 8.5" stroke="#ffffff" stroke-width="1.3"/></svg><svg class="a" style="left:767px;top:129px" width="17" height="9" viewBox="0 0 17 9">
<path d="M2.5 0.5 H14.5 L16.5 4 V7.5 Q16.5 8.5 15.5 8.5 H1.5 Q0.5 8.5 0.5 7.5 V4Z" fill="#e8eaec" stroke="#6c7278" stroke-width="1"/>
<rect x="1" y="4.5" width="15" height="0.8" fill="#9aa0a6"/>
<rect x="12" y="5.8" width="2.5" height="1.4" fill="#3aa03a"/>
</svg><div class="t" style="left:789px;top:124.84px;font-size:12px;color:#000;">D:\</div>
<div class="a" style="left:819px;top:121px;width:1px;height:17px;background:#cfcfcf;"></div>
<svg class="a" style="left:830px;top:122px" width="13" height="13" viewBox="0 0 13 13">
<path d="M1.5 0.5 H11.5 L12.5 10 V12 Q12.5 12.8 11.7 12.8 H1.3 Q0.5 12.8 0.5 12 V10Z" fill="#4f5a63"/>
<rect x="0.5" y="10" width="12" height="2.8" rx="0.6" fill="#6d7780"/>
<text x="6.5" y="8" font-size="6.5" font-family="Liberation Sans" font-weight="bold" fill="#dfe4e8" text-anchor="middle">E</text>
<rect x="10" y="11" width="1.4" height="1" fill="#5fd35a"/>
</svg><div class="t" style="left:849px;top:124.84px;font-size:12px;color:#000;">E:\</div>
<svg class="a" style="left:884px;top:125px" width="9" height="9" viewBox="0 0 9 9"><path d="M4.5 0 V9 M0 4.5 H9" stroke="#777" stroke-width="1.5"/></svg>
<svg class="a" style="left:905px;top:127px" width="10" height="6" viewBox="0 0 10 6"><path d="M0 0 H10 L5 6Z" fill="#777"/></svg>
<div class="a" style="left:627px;top:141px;width:615px;height:25px;background:#b8b3af;"></div>
<svg class="a" style="left:632px;top:148px" width="12" height="11" viewBox="0 0 12 11"><path d="M1 5.5 H11 M5.5 1 L1 5.5 L5.5 10" stroke="#fafafa" stroke-width="1.5" fill="none"/></svg><svg class="a" style="left:653px;top:148px" width="12" height="11" viewBox="0 0 12 11"><path d="M0 5.5 H10 M6.5 1 L11 5.5 L6.5 10" stroke="#d2cecb" stroke-width="1.5" fill="none"/></svg><svg class="a" style="left:674px;top:147px" width="11" height="12" viewBox="0 0 11 12"><path d="M5.5 12 V1.5 M1 6 L5.5 1.5 L10 6" stroke="#fafafa" stroke-width="1.5" fill="none"/></svg><svg class="a" style="left:695px;top:147px" width="11" height="12" viewBox="0 0 11 12"><path d="M5.5 0 V10.5 M1 6 L5.5 10.5 L10 6" stroke="#d2cecb" stroke-width="1.5" fill="none"/></svg><svg class="a" style="left:718px;top:148px" width="14" height="11" viewBox="0 0 14 11"><path d="M0 1 H14 M0 5.5 H14 M0 10 H14" stroke="#fafafa" stroke-width="1.6" fill="none"/></svg><svg class="a" style="left:772px;top:149px" width="7" height="10" viewBox="0 0 7 10"><path d="M1 1 L5 5 L1 9" stroke="#fafafa" stroke-width="1.8" fill="none"/></svg><svg class="a" style="left:810px;top:149px" width="7" height="10" viewBox="0 0 7 10"><path d="M1 1 L5 5 L1 9" stroke="#fafafa" stroke-width="1.8" fill="none"/></svg><svg class="a" style="left:858px;top:149px" width="7" height="10" viewBox="0 0 7 10"><path d="M1 1 L5 5 L1 9" stroke="#fafafa" stroke-width="1.8" fill="none"/></svg><svg class="a" style="left:745px;top:146px" width="16" height="13" viewBox="0 0 16 13">
<path d="M0.5 1.2 Q0.5 0 1.7 0 H5.6 Q6.3 0 6.8 0.6 L7.6 1.5 H14.8 Q15.6 1.5 15.6 2.3 V4 H0.5Z" fill="#dca21c"/>
<rect x="0" y="2.6" width="16" height="10.4" rx="1" fill="url(#fg)"/>
<rect x="0.3" y="12" width="15.4" height="1" fill="#d8a020"/>
</svg><div class="t" style="left:789px;top:147.84px;font-size:12px;color:#ffffff;-webkit-text-stroke:0.2px #fff">E:</div>
<div class="t" style="left:826px;top:148.52px;font-size:11.2px;color:#ffffff;-webkit-text-stroke:0.2px #fff">Test</div>
<div class="t" style="left:875px;top:148.35px;font-size:11.4px;color:#ffffff;-webkit-text-stroke:0.2px #fff">Telecaster</div>
<div class="a" style="left:627px;top:166px;width:615px;height:26px;background:#fafbfd;"></div>
<div class="a" style="left:627px;top:192px;width:615px;height:1px;background:#e3ebf5;"></div>
<div class="a" style="left:654px;top:166px;width:1px;height:26px;background:#e3ebf5;"></div>
<div class="a" style="left:889px;top:166px;width:1px;height:26px;background:#e3ebf5;"></div>
<div class="a" style="left:933px;top:166px;width:1px;height:26px;background:#e3ebf5;"></div>
<div class="a" style="left:1021px;top:166px;width:1px;height:26px;background:#e3ebf5;"></div>
<div class="a" style="left:1146px;top:166px;width:1px;height:26px;background:#e3ebf5;"></div>
<div class="t" style="left:661px;top:173.84px;font-size:12px;color:#3d4b5e;">Name</div>
<svg class="a" style="left:707px;top:175px" width="9" height="6" viewBox="0 0 9 6"><path d="M0.8 5 L4.5 1.2 L8.2 5" stroke="#58687c" stroke-width="1.6" fill="none"/></svg>
<div class="t" style="left:896px;top:173.84px;font-size:12px;color:#3d4b5e;">Ext</div>
<div class="t" style="left:1016px;top:173.84px;font-size:12px;color:#3d4b5e;transform:translateX(-100%)">Size</div>
<div class="t" style="left:1028px;top:173.84px;font-size:12px;color:#3d4b5e;">Modified</div>
<div class="t" style="left:1153px;top:173.84px;font-size:12px;color:#3d4b5e;">Created</div>
<div class="a" style="left:627px;top:193px;width:615px;height:321px;background:#f6f6f6;"></div>
<svg class="a" style="left:633px;top:222px" width="64" height="21" viewBox="0 0 64 21"><rect width="64" height="21" fill="url(#ckg)"/><svg x="0" y="0" width="64" height="21" viewBox="0 0 485 159" preserveAspectRatio="none"><use href="#tele"/></svg></svg>
<div class="t" style="left:707px;top:210.01px;font-size:11.8px;color:#000;letter-spacing:-0.3px"><span>Telecaster1.tga</span></div>
<div class="t" style="left:707px;top:227.01px;font-size:11.8px;color:#6a6a6a;letter-spacing:-0.15px">3,699 KB</div>
<div class="t" style="left:707px;top:244.01px;font-size:11.8px;color:#6a6a6a;letter-spacing:0.1px">2023-12-05 14:57:34</div>
<svg class="a" style="left:930px;top:222px" width="64" height="21" viewBox="0 0 64 21"><rect width="64" height="21" fill="url(#ckg)"/><svg x="0" y="0" width="64" height="21" viewBox="0 0 485 159" preserveAspectRatio="none"><use href="#tele"/></svg></svg>
<div class="t" style="left:1004px;top:210.01px;font-size:11.8px;color:#000;letter-spacing:-0.15px"><span>Telecaster1-</span><svg style="display:inline-block;vertical-align:baseline;overflow:visible" width="25" height="9" viewBox="0 0 25 9"><g transform="translate(0 -1.2) scale(1 0.93)" stroke="#000" stroke-width="1.15" fill="none" stroke-linecap="square"><path d="M1 1.2 H11.6 M6 1.2 V11.6 M7.2 4.8 L9.6 7.2"/><g transform="translate(13 0)"><path d="M0.8 3 H11.2 M4 0.8 V4.6 M0.8 6 H7.2 M4 6 L2.2 9 H7.4 M4.6 7.6 V11.6 M0.6 10.6 H7.6 M11 6.4 L7.8 10.4 M9.6 1 L10.4 1.8"/><path d="M7.4 0.6 Q7.4 8.6 11.6 11.4"/></g></g></svg><span>.tga</span></div>
<div class="t" style="left:1004px;top:227.01px;font-size:11.8px;color:#6a6a6a;letter-spacing:-0.15px">3,699 KB</div>
<div class="t" style="left:1004px;top:244.01px;font-size:11.8px;color:#6a6a6a;letter-spacing:0.1px">2023-12-05 14:57:34</div>
<svg class="a" style="left:633px;top:276px" width="64" height="64" viewBox="0 0 64 64"><rect width="64" height="64" fill="url(#ckg)"/><g transform="matrix(0,-0.26,0.26,0,11.6,63.3)"><svg width="485" height="159" viewBox="0 0 485 159"><use href="#tele2"/></svg></g></svg>
<div class="t" style="left:707px;top:286.01px;font-size:11.8px;color:#000;letter-spacing:-0.15px"><span>Telecaster2.tga</span></div>
<div class="t" style="left:707px;top:303.01px;font-size:11.8px;color:#6a6a6a;letter-spacing:-0.15px">5,626 KB</div>
<div class="t" style="left:707px;top:320.01px;font-size:11.8px;color:#6a6a6a;letter-spacing:0.1px">2023-12-05 15:00:45</div>
<svg class="a" style="left:629px;top:198px" width="12" height="12" viewBox="0 0 12 12"><circle cx="6" cy="6" r="5.5" fill="#fff"/><circle cx="6" cy="6" r="4" fill="#a6a9b1"/></svg>
<svg class="a" style="left:926px;top:198px" width="12" height="12" viewBox="0 0 12 12"><circle cx="6" cy="6" r="5.5" fill="#fff"/><circle cx="6" cy="6" r="4" fill="#a6a9b1"/></svg>
<svg class="a" style="left:629px;top:273px" width="12" height="12" viewBox="0 0 12 12"><circle cx="6" cy="6" r="5.5" fill="#fff"/><circle cx="6" cy="6" r="4" fill="#a6a9b1"/></svg>
<div class="a" style="left:8px;top:514px;width:1234px;height:32px;background:#f0f0f0;"></div>
<div class="t" style="left:11px;top:522.84px;font-size:12px;color:#1a1a1a;letter-spacing:-0.38px">7 items (88.49 GB free)</div>
<div class="a" style="left:181px;top:518px;width:1px;height:20px;background:#d5d5d5;"></div>
<div class="t" style="left:186px;top:522.84px;font-size:12px;color:#1a1a1a;letter-spacing:-0.365px">1 selected: 3.61 MB (3,787,644 bytes)</div>
<div class="t" style="left:385px;top:522.84px;font-size:12px;color:#1a1a1a;letter-spacing:-0.2px">1 file</div>
<div class="a" style="left:576px;top:518px;width:1px;height:20px;background:#d5d5d5;"></div>
<svg class="a" style="left:583px;top:520px" width="13" height="16" viewBox="0 0 13 16"><path d="M0.5 0.5 H9 L12.5 4 V15.5 H0.5Z" fill="#fdfdfd" stroke="#8a8a8a"/><rect x="3" y="6" width="7" height="5" fill="#5aa0dc"/></svg>
<div class="t" style="left:601px;top:522.84px;font-size:12px;color:#1a1a1a;letter-spacing:-0.3px">Telecaster1-<svg style="display:inline-block;vertical-align:baseline;overflow:visible" width="25" height="9" viewBox="0 0 25 9"><g transform="translate(0 -1.2) scale(1 0.93)" stroke="#1a1a1a" stroke-width="1.15" fill="none" stroke-linecap="square"><path d="M1 1.2 H11.6 M6 1.2 V11.6 M7.2 4.8 L9.6 7.2"/><g transform="translate(13 0)"><path d="M0.8 3 H11.2 M4 0.8 V4.6 M0.8 6 H7.2 M4 6 L2.2 9 H7.4 M4.6 7.6 V11.6 M0.6 10.6 H7.6 M11 6.4 L7.8 10.4 M9.6 1 L10.4 1.8"/><path d="M7.4 0.6 Q7.4 8.6 11.6 11.4"/></g></g></svg>.tga - 1700 x 557 (3.05:1)</div>
<div class="a" style="left:8px;top:546px;width:1234px;height:22px;background:#e8e8e8;"></div>
<div class="a" style="left:8px;top:567px;width:1234px;height:1px;background:#d6d6d6;"></div>
<svg class="a" style="left:190px;top:544px" width="82" height="26" viewBox="190 544 82 26"><path d="M192 569 V567.5 Q197.5 567.5 197.5 562.5 V550.5 Q197.5 546.5 201.5 546.5 H259.5 Q263.5 546.5 263.5 550.5 V562.5 Q263.5 567.5 269 567.5 V569Z" fill="#f0f0f0"/><path d="M192 567.5 Q197.5 567.5 197.5 562.5 V550.5 Q197.5 546.5 201.5 546.5 H259.5 Q263.5 546.5 263.5 550.5 V562.5 Q263.5 567.5 269 567.5" fill="none" stroke="#cfcfcf" stroke-width="1"/></svg>
<div class="a" style="left:86px;top:550px;width:1px;height:15px;background:#cfcfcf;"></div>
<div class="a" style="left:148px;top:550px;width:1px;height:15px;background:#cfcfcf;"></div>
<div class="a" style="left:339px;top:550px;width:1px;height:15px;background:#cfcfcf;"></div>
<div class="a" style="left:383px;top:550px;width:1px;height:15px;background:#cfcfcf;"></div>
<div class="a" style="left:454px;top:550px;width:1px;height:15px;background:#cfcfcf;"></div>
<div class="a" style="left:512px;top:550px;width:1px;height:15px;background:#cfcfcf;"></div>
<div class="t" style="left:20px;top:552.18px;font-size:11.6px;color:#1a1a1a;">Properties</div>
<div class="t" style="left:97px;top:552.18px;font-size:11.6px;color:#1a1a1a;">Version</div>
<div class="t" style="left:159px;top:552.18px;font-size:11.6px;color:#1a1a1a;">Meta</div>
<div class="t" style="left:208px;top:551.84px;font-size:12px;color:#000;font-weight:bold;">Preview</div>
<div class="t" style="left:275px;top:552.18px;font-size:11.6px;color:#1a1a1a;">Raw View</div>
<div class="t" style="left:348px;top:552.18px;font-size:11.6px;color:#1a1a1a;">Tags</div>
<div class="t" style="left:393px;top:552.18px;font-size:11.6px;color:#1a1a1a;">Find Files</div>
<div class="t" style="left:465px;top:552.18px;font-size:11.6px;color:#1a1a1a;">Report</div>
<div class="a" style="left:8px;top:568px;width:1234px;height:174px;background:#f0f0f0;"></div>
<div class="a" style="left:231px;top:578px;width:484px;height:158px;background:transparent;border:1px solid #e4e4e4"></div>
<svg class="a" style="left:231px;top:577px" width="485" height="159" viewBox="0 0 485 159"><use href="#tele"/></svg>
<div class="a" style="left:1220px;top:580px;width:14px;height:14px;background:#f28a1a;border-radius:1px"></div>
<svg class="a" style="left:1222px;top:584px" width="10" height="6" viewBox="0 0 10 6"><path d="M1.5 1 L5 4.5 L8.5 1" stroke="#fff" stroke-width="1.5" fill="none"/></svg>
<div class="a" style="left:938px;top:601px;width:300px;height:141px;background:transparent;border:1px solid #dcdcdc;border-bottom:none"></div>
<div class="t" style="left:946px;top:613.84px;font-size:12px;color:#1a1a1a;letter-spacing:-0.42px">Type: Targa (TGA)</div>
<div class="t" style="left:946px;top:629.84px;font-size:12px;color:#1a1a1a;letter-spacing:-0.42px">Size: 1700 x 557 [3.05:1], reduced to 485 x 159 (29%)</div>
<div class="t" style="left:946px;top:645.84px;font-size:12px;color:#1a1a1a;letter-spacing:-0.42px">Colors: 16M ARGB (32-bit)</div>
<div class="t" style="left:946px;top:661.84px;font-size:12px;color:#1a1a1a;letter-spacing:-0.42px">Area: 946,900 pixels (3.61 MB video mem)</div>
<div class="t" style="left:946px;top:677.84px;font-size:12px;color:#1a1a1a;letter-spacing:-0.42px">File size: 3,787,644 bytes, loaded in 90 ms</div>
<div class="t" style="left:946px;top:693.84px;font-size:12px;color:#1a1a1a;letter-spacing:-0.42px">Compression ratio: 100.00%</div>
</body></html>
